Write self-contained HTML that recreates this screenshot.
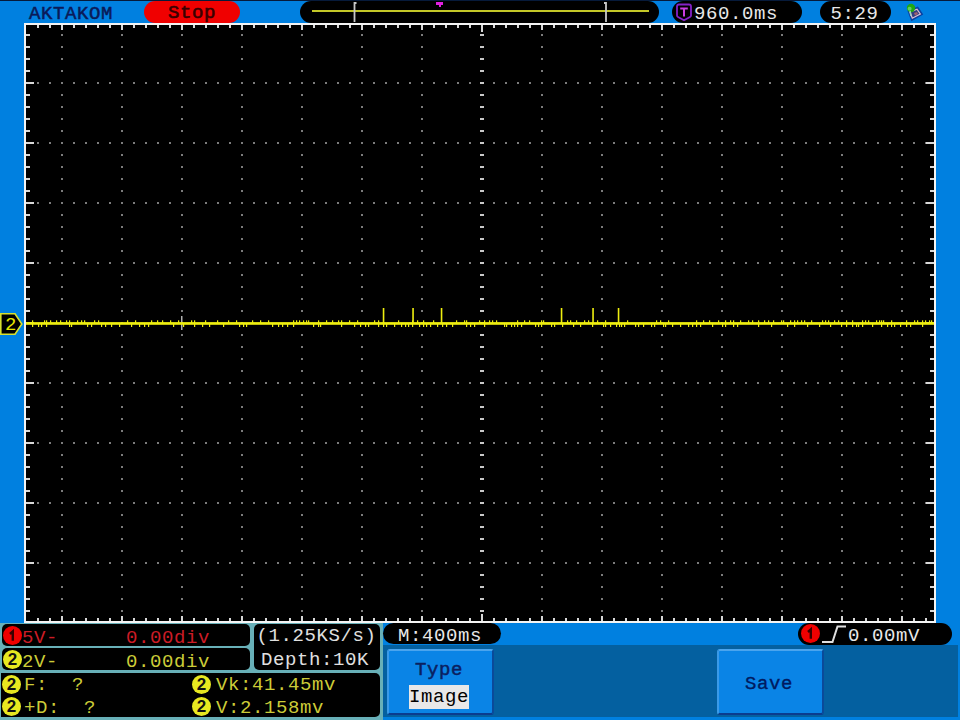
<!DOCTYPE html>
<html><head><meta charset="utf-8"><style>
*{margin:0;padding:0;box-sizing:border-box}
html,body{width:960px;height:720px;overflow:hidden;background:#0080e0;font-family:"Liberation Mono",monospace;}
.a{position:absolute}
.t{position:absolute;font-size:19px;line-height:20px;white-space:pre;letter-spacing:0.6px}
.pill{position:absolute;background:#000;border-radius:11px}
.box{position:absolute;background:#000;border-radius:5px}
.circ{position:absolute;border-radius:50%;text-align:center;color:#111;font-family:"Liberation Sans",sans-serif;font-weight:bold;font-size:17px;line-height:19px}
</style></head><body>
<div class="a" style="left:0;top:0;width:960px;height:1px;background:#061a3a"></div>
<div class="t" style="left:29px;top:4px;color:#0a1a58;font-size:19px;letter-spacing:0.6px;-webkit-text-stroke:0.5px #0a1a58">AKTAKOM</div>
<div class="pill" style="left:144px;top:1px;width:96px;height:22px;background:#f00000;border-radius:11px"></div>
<div class="t" style="left:168px;top:3px;color:#3a0000;-webkit-text-stroke:0.6px #3a0000">Stop</div>
<div class="pill" style="left:300px;top:1px;width:359px;height:22px"></div>
<div class="a" style="left:312px;top:10.4px;width:337px;height:1.6px;background:#c4c828"></div>
<svg class="a" style="left:350px;top:0" width="10" height="24"><path d="M4.5 22 V3 H6.5" fill="none" stroke="#c8c8c8" stroke-width="1.8"/></svg>
<svg class="a" style="left:600px;top:0" width="10" height="24"><path d="M6 22 V3 H4" fill="none" stroke="#c8c8c8" stroke-width="1.8"/></svg>
<div class="a" style="left:436px;top:2px;width:7px;height:3px;background:#e020e0"></div>
<div class="a" style="left:438.5px;top:4px;width:2px;height:3px;background:#e020e0"></div>
<div class="pill" style="left:672px;top:1px;width:130px;height:22px"></div>
<svg class="a" style="left:675px;top:3px" width="18" height="19" viewBox="0 0 18 19"><path d="M4 1.5 H14 Q16 1.5 16 3.5 V12.5 Q16 13.5 15 14 L9 17.3 L3 14 Q2 13.5 2 12.5 V3.5 Q2 1.5 4 1.5 Z" fill="none" stroke="#8422c8" stroke-width="1.8"/><path d="M5.2 5.6 H12.8 M9 5.6 V13.6" stroke="#c83ee0" stroke-width="2"/></svg>
<div class="t" style="left:694px;top:4px;color:#e8e8e8">960.0ms</div>
<div class="pill" style="left:820px;top:1px;width:71px;height:22px"></div>
<div class="t" style="left:830.5px;top:4px;color:#e8e8e8">5:29</div>
<svg class="a" style="left:900px;top:0px" width="28" height="24" viewBox="0 0 28 24"><path d="M9 11.5 L17.5 8 L21.5 14 L12 19.5 Z" fill="#0a3a9a" stroke="#0a40a0" stroke-width="2.5"/><path d="M10 12 L17 9.2 L20.3 14 L12.3 18.2 Z" fill="#304080" stroke="#e0c0d0" stroke-width="1.2"/><path d="M14 13 L17 12 L18 14 L15 15.5 Z" fill="#a06070"/><circle cx="11" cy="8" r="4.2" fill="#20a810"/><circle cx="9.6" cy="8.8" r="2" fill="#60d060"/><path d="M10 11 L11 16" stroke="#a0d0c0" stroke-width="1.5"/></svg>
<svg class="a" style="left:0;top:0" width="960" height="720">
<rect x="26" y="25" width="908" height="596" fill="#000"/>
<rect x="61" y="34" width="2" height="2" fill="#7c7c7c"/>
<rect x="61" y="46" width="2" height="2" fill="#7c7c7c"/>
<rect x="61" y="58" width="2" height="2" fill="#7c7c7c"/>
<rect x="61" y="70" width="2" height="2" fill="#7c7c7c"/>
<rect x="61" y="82" width="2" height="2" fill="#7c7c7c"/>
<rect x="61" y="94" width="2" height="2" fill="#7c7c7c"/>
<rect x="61" y="106" width="2" height="2" fill="#7c7c7c"/>
<rect x="61" y="118" width="2" height="2" fill="#7c7c7c"/>
<rect x="61" y="130" width="2" height="2" fill="#7c7c7c"/>
<rect x="61" y="142" width="2" height="2" fill="#7c7c7c"/>
<rect x="61" y="154" width="2" height="2" fill="#7c7c7c"/>
<rect x="61" y="166" width="2" height="2" fill="#7c7c7c"/>
<rect x="61" y="178" width="2" height="2" fill="#7c7c7c"/>
<rect x="61" y="190" width="2" height="2" fill="#7c7c7c"/>
<rect x="61" y="202" width="2" height="2" fill="#7c7c7c"/>
<rect x="61" y="214" width="2" height="2" fill="#7c7c7c"/>
<rect x="61" y="226" width="2" height="2" fill="#7c7c7c"/>
<rect x="61" y="238" width="2" height="2" fill="#7c7c7c"/>
<rect x="61" y="250" width="2" height="2" fill="#7c7c7c"/>
<rect x="61" y="262" width="2" height="2" fill="#7c7c7c"/>
<rect x="61" y="274" width="2" height="2" fill="#7c7c7c"/>
<rect x="61" y="286" width="2" height="2" fill="#7c7c7c"/>
<rect x="61" y="298" width="2" height="2" fill="#7c7c7c"/>
<rect x="61" y="310" width="2" height="2" fill="#7c7c7c"/>
<rect x="61" y="322" width="2" height="2" fill="#7c7c7c"/>
<rect x="61" y="334" width="2" height="2" fill="#7c7c7c"/>
<rect x="61" y="346" width="2" height="2" fill="#7c7c7c"/>
<rect x="61" y="358" width="2" height="2" fill="#7c7c7c"/>
<rect x="61" y="370" width="2" height="2" fill="#7c7c7c"/>
<rect x="61" y="382" width="2" height="2" fill="#7c7c7c"/>
<rect x="61" y="394" width="2" height="2" fill="#7c7c7c"/>
<rect x="61" y="406" width="2" height="2" fill="#7c7c7c"/>
<rect x="61" y="418" width="2" height="2" fill="#7c7c7c"/>
<rect x="61" y="430" width="2" height="2" fill="#7c7c7c"/>
<rect x="61" y="442" width="2" height="2" fill="#7c7c7c"/>
<rect x="61" y="454" width="2" height="2" fill="#7c7c7c"/>
<rect x="61" y="466" width="2" height="2" fill="#7c7c7c"/>
<rect x="61" y="478" width="2" height="2" fill="#7c7c7c"/>
<rect x="61" y="490" width="2" height="2" fill="#7c7c7c"/>
<rect x="61" y="502" width="2" height="2" fill="#7c7c7c"/>
<rect x="61" y="514" width="2" height="2" fill="#7c7c7c"/>
<rect x="61" y="526" width="2" height="2" fill="#7c7c7c"/>
<rect x="61" y="538" width="2" height="2" fill="#7c7c7c"/>
<rect x="61" y="550" width="2" height="2" fill="#7c7c7c"/>
<rect x="61" y="562" width="2" height="2" fill="#7c7c7c"/>
<rect x="61" y="574" width="2" height="2" fill="#7c7c7c"/>
<rect x="61" y="586" width="2" height="2" fill="#7c7c7c"/>
<rect x="61" y="598" width="2" height="2" fill="#7c7c7c"/>
<rect x="61" y="610" width="2" height="2" fill="#7c7c7c"/>
<rect x="121" y="34" width="2" height="2" fill="#7c7c7c"/>
<rect x="121" y="46" width="2" height="2" fill="#7c7c7c"/>
<rect x="121" y="58" width="2" height="2" fill="#7c7c7c"/>
<rect x="121" y="70" width="2" height="2" fill="#7c7c7c"/>
<rect x="121" y="82" width="2" height="2" fill="#7c7c7c"/>
<rect x="121" y="94" width="2" height="2" fill="#7c7c7c"/>
<rect x="121" y="106" width="2" height="2" fill="#7c7c7c"/>
<rect x="121" y="118" width="2" height="2" fill="#7c7c7c"/>
<rect x="121" y="130" width="2" height="2" fill="#7c7c7c"/>
<rect x="121" y="142" width="2" height="2" fill="#7c7c7c"/>
<rect x="121" y="154" width="2" height="2" fill="#7c7c7c"/>
<rect x="121" y="166" width="2" height="2" fill="#7c7c7c"/>
<rect x="121" y="178" width="2" height="2" fill="#7c7c7c"/>
<rect x="121" y="190" width="2" height="2" fill="#7c7c7c"/>
<rect x="121" y="202" width="2" height="2" fill="#7c7c7c"/>
<rect x="121" y="214" width="2" height="2" fill="#7c7c7c"/>
<rect x="121" y="226" width="2" height="2" fill="#7c7c7c"/>
<rect x="121" y="238" width="2" height="2" fill="#7c7c7c"/>
<rect x="121" y="250" width="2" height="2" fill="#7c7c7c"/>
<rect x="121" y="262" width="2" height="2" fill="#7c7c7c"/>
<rect x="121" y="274" width="2" height="2" fill="#7c7c7c"/>
<rect x="121" y="286" width="2" height="2" fill="#7c7c7c"/>
<rect x="121" y="298" width="2" height="2" fill="#7c7c7c"/>
<rect x="121" y="310" width="2" height="2" fill="#7c7c7c"/>
<rect x="121" y="322" width="2" height="2" fill="#7c7c7c"/>
<rect x="121" y="334" width="2" height="2" fill="#7c7c7c"/>
<rect x="121" y="346" width="2" height="2" fill="#7c7c7c"/>
<rect x="121" y="358" width="2" height="2" fill="#7c7c7c"/>
<rect x="121" y="370" width="2" height="2" fill="#7c7c7c"/>
<rect x="121" y="382" width="2" height="2" fill="#7c7c7c"/>
<rect x="121" y="394" width="2" height="2" fill="#7c7c7c"/>
<rect x="121" y="406" width="2" height="2" fill="#7c7c7c"/>
<rect x="121" y="418" width="2" height="2" fill="#7c7c7c"/>
<rect x="121" y="430" width="2" height="2" fill="#7c7c7c"/>
<rect x="121" y="442" width="2" height="2" fill="#7c7c7c"/>
<rect x="121" y="454" width="2" height="2" fill="#7c7c7c"/>
<rect x="121" y="466" width="2" height="2" fill="#7c7c7c"/>
<rect x="121" y="478" width="2" height="2" fill="#7c7c7c"/>
<rect x="121" y="490" width="2" height="2" fill="#7c7c7c"/>
<rect x="121" y="502" width="2" height="2" fill="#7c7c7c"/>
<rect x="121" y="514" width="2" height="2" fill="#7c7c7c"/>
<rect x="121" y="526" width="2" height="2" fill="#7c7c7c"/>
<rect x="121" y="538" width="2" height="2" fill="#7c7c7c"/>
<rect x="121" y="550" width="2" height="2" fill="#7c7c7c"/>
<rect x="121" y="562" width="2" height="2" fill="#7c7c7c"/>
<rect x="121" y="574" width="2" height="2" fill="#7c7c7c"/>
<rect x="121" y="586" width="2" height="2" fill="#7c7c7c"/>
<rect x="121" y="598" width="2" height="2" fill="#7c7c7c"/>
<rect x="121" y="610" width="2" height="2" fill="#7c7c7c"/>
<rect x="181" y="34" width="2" height="2" fill="#7c7c7c"/>
<rect x="181" y="46" width="2" height="2" fill="#7c7c7c"/>
<rect x="181" y="58" width="2" height="2" fill="#7c7c7c"/>
<rect x="181" y="70" width="2" height="2" fill="#7c7c7c"/>
<rect x="181" y="82" width="2" height="2" fill="#7c7c7c"/>
<rect x="181" y="94" width="2" height="2" fill="#7c7c7c"/>
<rect x="181" y="106" width="2" height="2" fill="#7c7c7c"/>
<rect x="181" y="118" width="2" height="2" fill="#7c7c7c"/>
<rect x="181" y="130" width="2" height="2" fill="#7c7c7c"/>
<rect x="181" y="142" width="2" height="2" fill="#7c7c7c"/>
<rect x="181" y="154" width="2" height="2" fill="#7c7c7c"/>
<rect x="181" y="166" width="2" height="2" fill="#7c7c7c"/>
<rect x="181" y="178" width="2" height="2" fill="#7c7c7c"/>
<rect x="181" y="190" width="2" height="2" fill="#7c7c7c"/>
<rect x="181" y="202" width="2" height="2" fill="#7c7c7c"/>
<rect x="181" y="214" width="2" height="2" fill="#7c7c7c"/>
<rect x="181" y="226" width="2" height="2" fill="#7c7c7c"/>
<rect x="181" y="238" width="2" height="2" fill="#7c7c7c"/>
<rect x="181" y="250" width="2" height="2" fill="#7c7c7c"/>
<rect x="181" y="262" width="2" height="2" fill="#7c7c7c"/>
<rect x="181" y="274" width="2" height="2" fill="#7c7c7c"/>
<rect x="181" y="286" width="2" height="2" fill="#7c7c7c"/>
<rect x="181" y="298" width="2" height="2" fill="#7c7c7c"/>
<rect x="181" y="310" width="2" height="2" fill="#7c7c7c"/>
<rect x="181" y="322" width="2" height="2" fill="#7c7c7c"/>
<rect x="181" y="334" width="2" height="2" fill="#7c7c7c"/>
<rect x="181" y="346" width="2" height="2" fill="#7c7c7c"/>
<rect x="181" y="358" width="2" height="2" fill="#7c7c7c"/>
<rect x="181" y="370" width="2" height="2" fill="#7c7c7c"/>
<rect x="181" y="382" width="2" height="2" fill="#7c7c7c"/>
<rect x="181" y="394" width="2" height="2" fill="#7c7c7c"/>
<rect x="181" y="406" width="2" height="2" fill="#7c7c7c"/>
<rect x="181" y="418" width="2" height="2" fill="#7c7c7c"/>
<rect x="181" y="430" width="2" height="2" fill="#7c7c7c"/>
<rect x="181" y="442" width="2" height="2" fill="#7c7c7c"/>
<rect x="181" y="454" width="2" height="2" fill="#7c7c7c"/>
<rect x="181" y="466" width="2" height="2" fill="#7c7c7c"/>
<rect x="181" y="478" width="2" height="2" fill="#7c7c7c"/>
<rect x="181" y="490" width="2" height="2" fill="#7c7c7c"/>
<rect x="181" y="502" width="2" height="2" fill="#7c7c7c"/>
<rect x="181" y="514" width="2" height="2" fill="#7c7c7c"/>
<rect x="181" y="526" width="2" height="2" fill="#7c7c7c"/>
<rect x="181" y="538" width="2" height="2" fill="#7c7c7c"/>
<rect x="181" y="550" width="2" height="2" fill="#7c7c7c"/>
<rect x="181" y="562" width="2" height="2" fill="#7c7c7c"/>
<rect x="181" y="574" width="2" height="2" fill="#7c7c7c"/>
<rect x="181" y="586" width="2" height="2" fill="#7c7c7c"/>
<rect x="181" y="598" width="2" height="2" fill="#7c7c7c"/>
<rect x="181" y="610" width="2" height="2" fill="#7c7c7c"/>
<rect x="241" y="34" width="2" height="2" fill="#7c7c7c"/>
<rect x="241" y="46" width="2" height="2" fill="#7c7c7c"/>
<rect x="241" y="58" width="2" height="2" fill="#7c7c7c"/>
<rect x="241" y="70" width="2" height="2" fill="#7c7c7c"/>
<rect x="241" y="82" width="2" height="2" fill="#7c7c7c"/>
<rect x="241" y="94" width="2" height="2" fill="#7c7c7c"/>
<rect x="241" y="106" width="2" height="2" fill="#7c7c7c"/>
<rect x="241" y="118" width="2" height="2" fill="#7c7c7c"/>
<rect x="241" y="130" width="2" height="2" fill="#7c7c7c"/>
<rect x="241" y="142" width="2" height="2" fill="#7c7c7c"/>
<rect x="241" y="154" width="2" height="2" fill="#7c7c7c"/>
<rect x="241" y="166" width="2" height="2" fill="#7c7c7c"/>
<rect x="241" y="178" width="2" height="2" fill="#7c7c7c"/>
<rect x="241" y="190" width="2" height="2" fill="#7c7c7c"/>
<rect x="241" y="202" width="2" height="2" fill="#7c7c7c"/>
<rect x="241" y="214" width="2" height="2" fill="#7c7c7c"/>
<rect x="241" y="226" width="2" height="2" fill="#7c7c7c"/>
<rect x="241" y="238" width="2" height="2" fill="#7c7c7c"/>
<rect x="241" y="250" width="2" height="2" fill="#7c7c7c"/>
<rect x="241" y="262" width="2" height="2" fill="#7c7c7c"/>
<rect x="241" y="274" width="2" height="2" fill="#7c7c7c"/>
<rect x="241" y="286" width="2" height="2" fill="#7c7c7c"/>
<rect x="241" y="298" width="2" height="2" fill="#7c7c7c"/>
<rect x="241" y="310" width="2" height="2" fill="#7c7c7c"/>
<rect x="241" y="322" width="2" height="2" fill="#7c7c7c"/>
<rect x="241" y="334" width="2" height="2" fill="#7c7c7c"/>
<rect x="241" y="346" width="2" height="2" fill="#7c7c7c"/>
<rect x="241" y="358" width="2" height="2" fill="#7c7c7c"/>
<rect x="241" y="370" width="2" height="2" fill="#7c7c7c"/>
<rect x="241" y="382" width="2" height="2" fill="#7c7c7c"/>
<rect x="241" y="394" width="2" height="2" fill="#7c7c7c"/>
<rect x="241" y="406" width="2" height="2" fill="#7c7c7c"/>
<rect x="241" y="418" width="2" height="2" fill="#7c7c7c"/>
<rect x="241" y="430" width="2" height="2" fill="#7c7c7c"/>
<rect x="241" y="442" width="2" height="2" fill="#7c7c7c"/>
<rect x="241" y="454" width="2" height="2" fill="#7c7c7c"/>
<rect x="241" y="466" width="2" height="2" fill="#7c7c7c"/>
<rect x="241" y="478" width="2" height="2" fill="#7c7c7c"/>
<rect x="241" y="490" width="2" height="2" fill="#7c7c7c"/>
<rect x="241" y="502" width="2" height="2" fill="#7c7c7c"/>
<rect x="241" y="514" width="2" height="2" fill="#7c7c7c"/>
<rect x="241" y="526" width="2" height="2" fill="#7c7c7c"/>
<rect x="241" y="538" width="2" height="2" fill="#7c7c7c"/>
<rect x="241" y="550" width="2" height="2" fill="#7c7c7c"/>
<rect x="241" y="562" width="2" height="2" fill="#7c7c7c"/>
<rect x="241" y="574" width="2" height="2" fill="#7c7c7c"/>
<rect x="241" y="586" width="2" height="2" fill="#7c7c7c"/>
<rect x="241" y="598" width="2" height="2" fill="#7c7c7c"/>
<rect x="241" y="610" width="2" height="2" fill="#7c7c7c"/>
<rect x="301" y="34" width="2" height="2" fill="#7c7c7c"/>
<rect x="301" y="46" width="2" height="2" fill="#7c7c7c"/>
<rect x="301" y="58" width="2" height="2" fill="#7c7c7c"/>
<rect x="301" y="70" width="2" height="2" fill="#7c7c7c"/>
<rect x="301" y="82" width="2" height="2" fill="#7c7c7c"/>
<rect x="301" y="94" width="2" height="2" fill="#7c7c7c"/>
<rect x="301" y="106" width="2" height="2" fill="#7c7c7c"/>
<rect x="301" y="118" width="2" height="2" fill="#7c7c7c"/>
<rect x="301" y="130" width="2" height="2" fill="#7c7c7c"/>
<rect x="301" y="142" width="2" height="2" fill="#7c7c7c"/>
<rect x="301" y="154" width="2" height="2" fill="#7c7c7c"/>
<rect x="301" y="166" width="2" height="2" fill="#7c7c7c"/>
<rect x="301" y="178" width="2" height="2" fill="#7c7c7c"/>
<rect x="301" y="190" width="2" height="2" fill="#7c7c7c"/>
<rect x="301" y="202" width="2" height="2" fill="#7c7c7c"/>
<rect x="301" y="214" width="2" height="2" fill="#7c7c7c"/>
<rect x="301" y="226" width="2" height="2" fill="#7c7c7c"/>
<rect x="301" y="238" width="2" height="2" fill="#7c7c7c"/>
<rect x="301" y="250" width="2" height="2" fill="#7c7c7c"/>
<rect x="301" y="262" width="2" height="2" fill="#7c7c7c"/>
<rect x="301" y="274" width="2" height="2" fill="#7c7c7c"/>
<rect x="301" y="286" width="2" height="2" fill="#7c7c7c"/>
<rect x="301" y="298" width="2" height="2" fill="#7c7c7c"/>
<rect x="301" y="310" width="2" height="2" fill="#7c7c7c"/>
<rect x="301" y="322" width="2" height="2" fill="#7c7c7c"/>
<rect x="301" y="334" width="2" height="2" fill="#7c7c7c"/>
<rect x="301" y="346" width="2" height="2" fill="#7c7c7c"/>
<rect x="301" y="358" width="2" height="2" fill="#7c7c7c"/>
<rect x="301" y="370" width="2" height="2" fill="#7c7c7c"/>
<rect x="301" y="382" width="2" height="2" fill="#7c7c7c"/>
<rect x="301" y="394" width="2" height="2" fill="#7c7c7c"/>
<rect x="301" y="406" width="2" height="2" fill="#7c7c7c"/>
<rect x="301" y="418" width="2" height="2" fill="#7c7c7c"/>
<rect x="301" y="430" width="2" height="2" fill="#7c7c7c"/>
<rect x="301" y="442" width="2" height="2" fill="#7c7c7c"/>
<rect x="301" y="454" width="2" height="2" fill="#7c7c7c"/>
<rect x="301" y="466" width="2" height="2" fill="#7c7c7c"/>
<rect x="301" y="478" width="2" height="2" fill="#7c7c7c"/>
<rect x="301" y="490" width="2" height="2" fill="#7c7c7c"/>
<rect x="301" y="502" width="2" height="2" fill="#7c7c7c"/>
<rect x="301" y="514" width="2" height="2" fill="#7c7c7c"/>
<rect x="301" y="526" width="2" height="2" fill="#7c7c7c"/>
<rect x="301" y="538" width="2" height="2" fill="#7c7c7c"/>
<rect x="301" y="550" width="2" height="2" fill="#7c7c7c"/>
<rect x="301" y="562" width="2" height="2" fill="#7c7c7c"/>
<rect x="301" y="574" width="2" height="2" fill="#7c7c7c"/>
<rect x="301" y="586" width="2" height="2" fill="#7c7c7c"/>
<rect x="301" y="598" width="2" height="2" fill="#7c7c7c"/>
<rect x="301" y="610" width="2" height="2" fill="#7c7c7c"/>
<rect x="361" y="34" width="2" height="2" fill="#7c7c7c"/>
<rect x="361" y="46" width="2" height="2" fill="#7c7c7c"/>
<rect x="361" y="58" width="2" height="2" fill="#7c7c7c"/>
<rect x="361" y="70" width="2" height="2" fill="#7c7c7c"/>
<rect x="361" y="82" width="2" height="2" fill="#7c7c7c"/>
<rect x="361" y="94" width="2" height="2" fill="#7c7c7c"/>
<rect x="361" y="106" width="2" height="2" fill="#7c7c7c"/>
<rect x="361" y="118" width="2" height="2" fill="#7c7c7c"/>
<rect x="361" y="130" width="2" height="2" fill="#7c7c7c"/>
<rect x="361" y="142" width="2" height="2" fill="#7c7c7c"/>
<rect x="361" y="154" width="2" height="2" fill="#7c7c7c"/>
<rect x="361" y="166" width="2" height="2" fill="#7c7c7c"/>
<rect x="361" y="178" width="2" height="2" fill="#7c7c7c"/>
<rect x="361" y="190" width="2" height="2" fill="#7c7c7c"/>
<rect x="361" y="202" width="2" height="2" fill="#7c7c7c"/>
<rect x="361" y="214" width="2" height="2" fill="#7c7c7c"/>
<rect x="361" y="226" width="2" height="2" fill="#7c7c7c"/>
<rect x="361" y="238" width="2" height="2" fill="#7c7c7c"/>
<rect x="361" y="250" width="2" height="2" fill="#7c7c7c"/>
<rect x="361" y="262" width="2" height="2" fill="#7c7c7c"/>
<rect x="361" y="274" width="2" height="2" fill="#7c7c7c"/>
<rect x="361" y="286" width="2" height="2" fill="#7c7c7c"/>
<rect x="361" y="298" width="2" height="2" fill="#7c7c7c"/>
<rect x="361" y="310" width="2" height="2" fill="#7c7c7c"/>
<rect x="361" y="322" width="2" height="2" fill="#7c7c7c"/>
<rect x="361" y="334" width="2" height="2" fill="#7c7c7c"/>
<rect x="361" y="346" width="2" height="2" fill="#7c7c7c"/>
<rect x="361" y="358" width="2" height="2" fill="#7c7c7c"/>
<rect x="361" y="370" width="2" height="2" fill="#7c7c7c"/>
<rect x="361" y="382" width="2" height="2" fill="#7c7c7c"/>
<rect x="361" y="394" width="2" height="2" fill="#7c7c7c"/>
<rect x="361" y="406" width="2" height="2" fill="#7c7c7c"/>
<rect x="361" y="418" width="2" height="2" fill="#7c7c7c"/>
<rect x="361" y="430" width="2" height="2" fill="#7c7c7c"/>
<rect x="361" y="442" width="2" height="2" fill="#7c7c7c"/>
<rect x="361" y="454" width="2" height="2" fill="#7c7c7c"/>
<rect x="361" y="466" width="2" height="2" fill="#7c7c7c"/>
<rect x="361" y="478" width="2" height="2" fill="#7c7c7c"/>
<rect x="361" y="490" width="2" height="2" fill="#7c7c7c"/>
<rect x="361" y="502" width="2" height="2" fill="#7c7c7c"/>
<rect x="361" y="514" width="2" height="2" fill="#7c7c7c"/>
<rect x="361" y="526" width="2" height="2" fill="#7c7c7c"/>
<rect x="361" y="538" width="2" height="2" fill="#7c7c7c"/>
<rect x="361" y="550" width="2" height="2" fill="#7c7c7c"/>
<rect x="361" y="562" width="2" height="2" fill="#7c7c7c"/>
<rect x="361" y="574" width="2" height="2" fill="#7c7c7c"/>
<rect x="361" y="586" width="2" height="2" fill="#7c7c7c"/>
<rect x="361" y="598" width="2" height="2" fill="#7c7c7c"/>
<rect x="361" y="610" width="2" height="2" fill="#7c7c7c"/>
<rect x="421" y="34" width="2" height="2" fill="#7c7c7c"/>
<rect x="421" y="46" width="2" height="2" fill="#7c7c7c"/>
<rect x="421" y="58" width="2" height="2" fill="#7c7c7c"/>
<rect x="421" y="70" width="2" height="2" fill="#7c7c7c"/>
<rect x="421" y="82" width="2" height="2" fill="#7c7c7c"/>
<rect x="421" y="94" width="2" height="2" fill="#7c7c7c"/>
<rect x="421" y="106" width="2" height="2" fill="#7c7c7c"/>
<rect x="421" y="118" width="2" height="2" fill="#7c7c7c"/>
<rect x="421" y="130" width="2" height="2" fill="#7c7c7c"/>
<rect x="421" y="142" width="2" height="2" fill="#7c7c7c"/>
<rect x="421" y="154" width="2" height="2" fill="#7c7c7c"/>
<rect x="421" y="166" width="2" height="2" fill="#7c7c7c"/>
<rect x="421" y="178" width="2" height="2" fill="#7c7c7c"/>
<rect x="421" y="190" width="2" height="2" fill="#7c7c7c"/>
<rect x="421" y="202" width="2" height="2" fill="#7c7c7c"/>
<rect x="421" y="214" width="2" height="2" fill="#7c7c7c"/>
<rect x="421" y="226" width="2" height="2" fill="#7c7c7c"/>
<rect x="421" y="238" width="2" height="2" fill="#7c7c7c"/>
<rect x="421" y="250" width="2" height="2" fill="#7c7c7c"/>
<rect x="421" y="262" width="2" height="2" fill="#7c7c7c"/>
<rect x="421" y="274" width="2" height="2" fill="#7c7c7c"/>
<rect x="421" y="286" width="2" height="2" fill="#7c7c7c"/>
<rect x="421" y="298" width="2" height="2" fill="#7c7c7c"/>
<rect x="421" y="310" width="2" height="2" fill="#7c7c7c"/>
<rect x="421" y="322" width="2" height="2" fill="#7c7c7c"/>
<rect x="421" y="334" width="2" height="2" fill="#7c7c7c"/>
<rect x="421" y="346" width="2" height="2" fill="#7c7c7c"/>
<rect x="421" y="358" width="2" height="2" fill="#7c7c7c"/>
<rect x="421" y="370" width="2" height="2" fill="#7c7c7c"/>
<rect x="421" y="382" width="2" height="2" fill="#7c7c7c"/>
<rect x="421" y="394" width="2" height="2" fill="#7c7c7c"/>
<rect x="421" y="406" width="2" height="2" fill="#7c7c7c"/>
<rect x="421" y="418" width="2" height="2" fill="#7c7c7c"/>
<rect x="421" y="430" width="2" height="2" fill="#7c7c7c"/>
<rect x="421" y="442" width="2" height="2" fill="#7c7c7c"/>
<rect x="421" y="454" width="2" height="2" fill="#7c7c7c"/>
<rect x="421" y="466" width="2" height="2" fill="#7c7c7c"/>
<rect x="421" y="478" width="2" height="2" fill="#7c7c7c"/>
<rect x="421" y="490" width="2" height="2" fill="#7c7c7c"/>
<rect x="421" y="502" width="2" height="2" fill="#7c7c7c"/>
<rect x="421" y="514" width="2" height="2" fill="#7c7c7c"/>
<rect x="421" y="526" width="2" height="2" fill="#7c7c7c"/>
<rect x="421" y="538" width="2" height="2" fill="#7c7c7c"/>
<rect x="421" y="550" width="2" height="2" fill="#7c7c7c"/>
<rect x="421" y="562" width="2" height="2" fill="#7c7c7c"/>
<rect x="421" y="574" width="2" height="2" fill="#7c7c7c"/>
<rect x="421" y="586" width="2" height="2" fill="#7c7c7c"/>
<rect x="421" y="598" width="2" height="2" fill="#7c7c7c"/>
<rect x="421" y="610" width="2" height="2" fill="#7c7c7c"/>
<rect x="541" y="34" width="2" height="2" fill="#7c7c7c"/>
<rect x="541" y="46" width="2" height="2" fill="#7c7c7c"/>
<rect x="541" y="58" width="2" height="2" fill="#7c7c7c"/>
<rect x="541" y="70" width="2" height="2" fill="#7c7c7c"/>
<rect x="541" y="82" width="2" height="2" fill="#7c7c7c"/>
<rect x="541" y="94" width="2" height="2" fill="#7c7c7c"/>
<rect x="541" y="106" width="2" height="2" fill="#7c7c7c"/>
<rect x="541" y="118" width="2" height="2" fill="#7c7c7c"/>
<rect x="541" y="130" width="2" height="2" fill="#7c7c7c"/>
<rect x="541" y="142" width="2" height="2" fill="#7c7c7c"/>
<rect x="541" y="154" width="2" height="2" fill="#7c7c7c"/>
<rect x="541" y="166" width="2" height="2" fill="#7c7c7c"/>
<rect x="541" y="178" width="2" height="2" fill="#7c7c7c"/>
<rect x="541" y="190" width="2" height="2" fill="#7c7c7c"/>
<rect x="541" y="202" width="2" height="2" fill="#7c7c7c"/>
<rect x="541" y="214" width="2" height="2" fill="#7c7c7c"/>
<rect x="541" y="226" width="2" height="2" fill="#7c7c7c"/>
<rect x="541" y="238" width="2" height="2" fill="#7c7c7c"/>
<rect x="541" y="250" width="2" height="2" fill="#7c7c7c"/>
<rect x="541" y="262" width="2" height="2" fill="#7c7c7c"/>
<rect x="541" y="274" width="2" height="2" fill="#7c7c7c"/>
<rect x="541" y="286" width="2" height="2" fill="#7c7c7c"/>
<rect x="541" y="298" width="2" height="2" fill="#7c7c7c"/>
<rect x="541" y="310" width="2" height="2" fill="#7c7c7c"/>
<rect x="541" y="322" width="2" height="2" fill="#7c7c7c"/>
<rect x="541" y="334" width="2" height="2" fill="#7c7c7c"/>
<rect x="541" y="346" width="2" height="2" fill="#7c7c7c"/>
<rect x="541" y="358" width="2" height="2" fill="#7c7c7c"/>
<rect x="541" y="370" width="2" height="2" fill="#7c7c7c"/>
<rect x="541" y="382" width="2" height="2" fill="#7c7c7c"/>
<rect x="541" y="394" width="2" height="2" fill="#7c7c7c"/>
<rect x="541" y="406" width="2" height="2" fill="#7c7c7c"/>
<rect x="541" y="418" width="2" height="2" fill="#7c7c7c"/>
<rect x="541" y="430" width="2" height="2" fill="#7c7c7c"/>
<rect x="541" y="442" width="2" height="2" fill="#7c7c7c"/>
<rect x="541" y="454" width="2" height="2" fill="#7c7c7c"/>
<rect x="541" y="466" width="2" height="2" fill="#7c7c7c"/>
<rect x="541" y="478" width="2" height="2" fill="#7c7c7c"/>
<rect x="541" y="490" width="2" height="2" fill="#7c7c7c"/>
<rect x="541" y="502" width="2" height="2" fill="#7c7c7c"/>
<rect x="541" y="514" width="2" height="2" fill="#7c7c7c"/>
<rect x="541" y="526" width="2" height="2" fill="#7c7c7c"/>
<rect x="541" y="538" width="2" height="2" fill="#7c7c7c"/>
<rect x="541" y="550" width="2" height="2" fill="#7c7c7c"/>
<rect x="541" y="562" width="2" height="2" fill="#7c7c7c"/>
<rect x="541" y="574" width="2" height="2" fill="#7c7c7c"/>
<rect x="541" y="586" width="2" height="2" fill="#7c7c7c"/>
<rect x="541" y="598" width="2" height="2" fill="#7c7c7c"/>
<rect x="541" y="610" width="2" height="2" fill="#7c7c7c"/>
<rect x="601" y="34" width="2" height="2" fill="#7c7c7c"/>
<rect x="601" y="46" width="2" height="2" fill="#7c7c7c"/>
<rect x="601" y="58" width="2" height="2" fill="#7c7c7c"/>
<rect x="601" y="70" width="2" height="2" fill="#7c7c7c"/>
<rect x="601" y="82" width="2" height="2" fill="#7c7c7c"/>
<rect x="601" y="94" width="2" height="2" fill="#7c7c7c"/>
<rect x="601" y="106" width="2" height="2" fill="#7c7c7c"/>
<rect x="601" y="118" width="2" height="2" fill="#7c7c7c"/>
<rect x="601" y="130" width="2" height="2" fill="#7c7c7c"/>
<rect x="601" y="142" width="2" height="2" fill="#7c7c7c"/>
<rect x="601" y="154" width="2" height="2" fill="#7c7c7c"/>
<rect x="601" y="166" width="2" height="2" fill="#7c7c7c"/>
<rect x="601" y="178" width="2" height="2" fill="#7c7c7c"/>
<rect x="601" y="190" width="2" height="2" fill="#7c7c7c"/>
<rect x="601" y="202" width="2" height="2" fill="#7c7c7c"/>
<rect x="601" y="214" width="2" height="2" fill="#7c7c7c"/>
<rect x="601" y="226" width="2" height="2" fill="#7c7c7c"/>
<rect x="601" y="238" width="2" height="2" fill="#7c7c7c"/>
<rect x="601" y="250" width="2" height="2" fill="#7c7c7c"/>
<rect x="601" y="262" width="2" height="2" fill="#7c7c7c"/>
<rect x="601" y="274" width="2" height="2" fill="#7c7c7c"/>
<rect x="601" y="286" width="2" height="2" fill="#7c7c7c"/>
<rect x="601" y="298" width="2" height="2" fill="#7c7c7c"/>
<rect x="601" y="310" width="2" height="2" fill="#7c7c7c"/>
<rect x="601" y="322" width="2" height="2" fill="#7c7c7c"/>
<rect x="601" y="334" width="2" height="2" fill="#7c7c7c"/>
<rect x="601" y="346" width="2" height="2" fill="#7c7c7c"/>
<rect x="601" y="358" width="2" height="2" fill="#7c7c7c"/>
<rect x="601" y="370" width="2" height="2" fill="#7c7c7c"/>
<rect x="601" y="382" width="2" height="2" fill="#7c7c7c"/>
<rect x="601" y="394" width="2" height="2" fill="#7c7c7c"/>
<rect x="601" y="406" width="2" height="2" fill="#7c7c7c"/>
<rect x="601" y="418" width="2" height="2" fill="#7c7c7c"/>
<rect x="601" y="430" width="2" height="2" fill="#7c7c7c"/>
<rect x="601" y="442" width="2" height="2" fill="#7c7c7c"/>
<rect x="601" y="454" width="2" height="2" fill="#7c7c7c"/>
<rect x="601" y="466" width="2" height="2" fill="#7c7c7c"/>
<rect x="601" y="478" width="2" height="2" fill="#7c7c7c"/>
<rect x="601" y="490" width="2" height="2" fill="#7c7c7c"/>
<rect x="601" y="502" width="2" height="2" fill="#7c7c7c"/>
<rect x="601" y="514" width="2" height="2" fill="#7c7c7c"/>
<rect x="601" y="526" width="2" height="2" fill="#7c7c7c"/>
<rect x="601" y="538" width="2" height="2" fill="#7c7c7c"/>
<rect x="601" y="550" width="2" height="2" fill="#7c7c7c"/>
<rect x="601" y="562" width="2" height="2" fill="#7c7c7c"/>
<rect x="601" y="574" width="2" height="2" fill="#7c7c7c"/>
<rect x="601" y="586" width="2" height="2" fill="#7c7c7c"/>
<rect x="601" y="598" width="2" height="2" fill="#7c7c7c"/>
<rect x="601" y="610" width="2" height="2" fill="#7c7c7c"/>
<rect x="661" y="34" width="2" height="2" fill="#7c7c7c"/>
<rect x="661" y="46" width="2" height="2" fill="#7c7c7c"/>
<rect x="661" y="58" width="2" height="2" fill="#7c7c7c"/>
<rect x="661" y="70" width="2" height="2" fill="#7c7c7c"/>
<rect x="661" y="82" width="2" height="2" fill="#7c7c7c"/>
<rect x="661" y="94" width="2" height="2" fill="#7c7c7c"/>
<rect x="661" y="106" width="2" height="2" fill="#7c7c7c"/>
<rect x="661" y="118" width="2" height="2" fill="#7c7c7c"/>
<rect x="661" y="130" width="2" height="2" fill="#7c7c7c"/>
<rect x="661" y="142" width="2" height="2" fill="#7c7c7c"/>
<rect x="661" y="154" width="2" height="2" fill="#7c7c7c"/>
<rect x="661" y="166" width="2" height="2" fill="#7c7c7c"/>
<rect x="661" y="178" width="2" height="2" fill="#7c7c7c"/>
<rect x="661" y="190" width="2" height="2" fill="#7c7c7c"/>
<rect x="661" y="202" width="2" height="2" fill="#7c7c7c"/>
<rect x="661" y="214" width="2" height="2" fill="#7c7c7c"/>
<rect x="661" y="226" width="2" height="2" fill="#7c7c7c"/>
<rect x="661" y="238" width="2" height="2" fill="#7c7c7c"/>
<rect x="661" y="250" width="2" height="2" fill="#7c7c7c"/>
<rect x="661" y="262" width="2" height="2" fill="#7c7c7c"/>
<rect x="661" y="274" width="2" height="2" fill="#7c7c7c"/>
<rect x="661" y="286" width="2" height="2" fill="#7c7c7c"/>
<rect x="661" y="298" width="2" height="2" fill="#7c7c7c"/>
<rect x="661" y="310" width="2" height="2" fill="#7c7c7c"/>
<rect x="661" y="322" width="2" height="2" fill="#7c7c7c"/>
<rect x="661" y="334" width="2" height="2" fill="#7c7c7c"/>
<rect x="661" y="346" width="2" height="2" fill="#7c7c7c"/>
<rect x="661" y="358" width="2" height="2" fill="#7c7c7c"/>
<rect x="661" y="370" width="2" height="2" fill="#7c7c7c"/>
<rect x="661" y="382" width="2" height="2" fill="#7c7c7c"/>
<rect x="661" y="394" width="2" height="2" fill="#7c7c7c"/>
<rect x="661" y="406" width="2" height="2" fill="#7c7c7c"/>
<rect x="661" y="418" width="2" height="2" fill="#7c7c7c"/>
<rect x="661" y="430" width="2" height="2" fill="#7c7c7c"/>
<rect x="661" y="442" width="2" height="2" fill="#7c7c7c"/>
<rect x="661" y="454" width="2" height="2" fill="#7c7c7c"/>
<rect x="661" y="466" width="2" height="2" fill="#7c7c7c"/>
<rect x="661" y="478" width="2" height="2" fill="#7c7c7c"/>
<rect x="661" y="490" width="2" height="2" fill="#7c7c7c"/>
<rect x="661" y="502" width="2" height="2" fill="#7c7c7c"/>
<rect x="661" y="514" width="2" height="2" fill="#7c7c7c"/>
<rect x="661" y="526" width="2" height="2" fill="#7c7c7c"/>
<rect x="661" y="538" width="2" height="2" fill="#7c7c7c"/>
<rect x="661" y="550" width="2" height="2" fill="#7c7c7c"/>
<rect x="661" y="562" width="2" height="2" fill="#7c7c7c"/>
<rect x="661" y="574" width="2" height="2" fill="#7c7c7c"/>
<rect x="661" y="586" width="2" height="2" fill="#7c7c7c"/>
<rect x="661" y="598" width="2" height="2" fill="#7c7c7c"/>
<rect x="661" y="610" width="2" height="2" fill="#7c7c7c"/>
<rect x="721" y="34" width="2" height="2" fill="#7c7c7c"/>
<rect x="721" y="46" width="2" height="2" fill="#7c7c7c"/>
<rect x="721" y="58" width="2" height="2" fill="#7c7c7c"/>
<rect x="721" y="70" width="2" height="2" fill="#7c7c7c"/>
<rect x="721" y="82" width="2" height="2" fill="#7c7c7c"/>
<rect x="721" y="94" width="2" height="2" fill="#7c7c7c"/>
<rect x="721" y="106" width="2" height="2" fill="#7c7c7c"/>
<rect x="721" y="118" width="2" height="2" fill="#7c7c7c"/>
<rect x="721" y="130" width="2" height="2" fill="#7c7c7c"/>
<rect x="721" y="142" width="2" height="2" fill="#7c7c7c"/>
<rect x="721" y="154" width="2" height="2" fill="#7c7c7c"/>
<rect x="721" y="166" width="2" height="2" fill="#7c7c7c"/>
<rect x="721" y="178" width="2" height="2" fill="#7c7c7c"/>
<rect x="721" y="190" width="2" height="2" fill="#7c7c7c"/>
<rect x="721" y="202" width="2" height="2" fill="#7c7c7c"/>
<rect x="721" y="214" width="2" height="2" fill="#7c7c7c"/>
<rect x="721" y="226" width="2" height="2" fill="#7c7c7c"/>
<rect x="721" y="238" width="2" height="2" fill="#7c7c7c"/>
<rect x="721" y="250" width="2" height="2" fill="#7c7c7c"/>
<rect x="721" y="262" width="2" height="2" fill="#7c7c7c"/>
<rect x="721" y="274" width="2" height="2" fill="#7c7c7c"/>
<rect x="721" y="286" width="2" height="2" fill="#7c7c7c"/>
<rect x="721" y="298" width="2" height="2" fill="#7c7c7c"/>
<rect x="721" y="310" width="2" height="2" fill="#7c7c7c"/>
<rect x="721" y="322" width="2" height="2" fill="#7c7c7c"/>
<rect x="721" y="334" width="2" height="2" fill="#7c7c7c"/>
<rect x="721" y="346" width="2" height="2" fill="#7c7c7c"/>
<rect x="721" y="358" width="2" height="2" fill="#7c7c7c"/>
<rect x="721" y="370" width="2" height="2" fill="#7c7c7c"/>
<rect x="721" y="382" width="2" height="2" fill="#7c7c7c"/>
<rect x="721" y="394" width="2" height="2" fill="#7c7c7c"/>
<rect x="721" y="406" width="2" height="2" fill="#7c7c7c"/>
<rect x="721" y="418" width="2" height="2" fill="#7c7c7c"/>
<rect x="721" y="430" width="2" height="2" fill="#7c7c7c"/>
<rect x="721" y="442" width="2" height="2" fill="#7c7c7c"/>
<rect x="721" y="454" width="2" height="2" fill="#7c7c7c"/>
<rect x="721" y="466" width="2" height="2" fill="#7c7c7c"/>
<rect x="721" y="478" width="2" height="2" fill="#7c7c7c"/>
<rect x="721" y="490" width="2" height="2" fill="#7c7c7c"/>
<rect x="721" y="502" width="2" height="2" fill="#7c7c7c"/>
<rect x="721" y="514" width="2" height="2" fill="#7c7c7c"/>
<rect x="721" y="526" width="2" height="2" fill="#7c7c7c"/>
<rect x="721" y="538" width="2" height="2" fill="#7c7c7c"/>
<rect x="721" y="550" width="2" height="2" fill="#7c7c7c"/>
<rect x="721" y="562" width="2" height="2" fill="#7c7c7c"/>
<rect x="721" y="574" width="2" height="2" fill="#7c7c7c"/>
<rect x="721" y="586" width="2" height="2" fill="#7c7c7c"/>
<rect x="721" y="598" width="2" height="2" fill="#7c7c7c"/>
<rect x="721" y="610" width="2" height="2" fill="#7c7c7c"/>
<rect x="781" y="34" width="2" height="2" fill="#7c7c7c"/>
<rect x="781" y="46" width="2" height="2" fill="#7c7c7c"/>
<rect x="781" y="58" width="2" height="2" fill="#7c7c7c"/>
<rect x="781" y="70" width="2" height="2" fill="#7c7c7c"/>
<rect x="781" y="82" width="2" height="2" fill="#7c7c7c"/>
<rect x="781" y="94" width="2" height="2" fill="#7c7c7c"/>
<rect x="781" y="106" width="2" height="2" fill="#7c7c7c"/>
<rect x="781" y="118" width="2" height="2" fill="#7c7c7c"/>
<rect x="781" y="130" width="2" height="2" fill="#7c7c7c"/>
<rect x="781" y="142" width="2" height="2" fill="#7c7c7c"/>
<rect x="781" y="154" width="2" height="2" fill="#7c7c7c"/>
<rect x="781" y="166" width="2" height="2" fill="#7c7c7c"/>
<rect x="781" y="178" width="2" height="2" fill="#7c7c7c"/>
<rect x="781" y="190" width="2" height="2" fill="#7c7c7c"/>
<rect x="781" y="202" width="2" height="2" fill="#7c7c7c"/>
<rect x="781" y="214" width="2" height="2" fill="#7c7c7c"/>
<rect x="781" y="226" width="2" height="2" fill="#7c7c7c"/>
<rect x="781" y="238" width="2" height="2" fill="#7c7c7c"/>
<rect x="781" y="250" width="2" height="2" fill="#7c7c7c"/>
<rect x="781" y="262" width="2" height="2" fill="#7c7c7c"/>
<rect x="781" y="274" width="2" height="2" fill="#7c7c7c"/>
<rect x="781" y="286" width="2" height="2" fill="#7c7c7c"/>
<rect x="781" y="298" width="2" height="2" fill="#7c7c7c"/>
<rect x="781" y="310" width="2" height="2" fill="#7c7c7c"/>
<rect x="781" y="322" width="2" height="2" fill="#7c7c7c"/>
<rect x="781" y="334" width="2" height="2" fill="#7c7c7c"/>
<rect x="781" y="346" width="2" height="2" fill="#7c7c7c"/>
<rect x="781" y="358" width="2" height="2" fill="#7c7c7c"/>
<rect x="781" y="370" width="2" height="2" fill="#7c7c7c"/>
<rect x="781" y="382" width="2" height="2" fill="#7c7c7c"/>
<rect x="781" y="394" width="2" height="2" fill="#7c7c7c"/>
<rect x="781" y="406" width="2" height="2" fill="#7c7c7c"/>
<rect x="781" y="418" width="2" height="2" fill="#7c7c7c"/>
<rect x="781" y="430" width="2" height="2" fill="#7c7c7c"/>
<rect x="781" y="442" width="2" height="2" fill="#7c7c7c"/>
<rect x="781" y="454" width="2" height="2" fill="#7c7c7c"/>
<rect x="781" y="466" width="2" height="2" fill="#7c7c7c"/>
<rect x="781" y="478" width="2" height="2" fill="#7c7c7c"/>
<rect x="781" y="490" width="2" height="2" fill="#7c7c7c"/>
<rect x="781" y="502" width="2" height="2" fill="#7c7c7c"/>
<rect x="781" y="514" width="2" height="2" fill="#7c7c7c"/>
<rect x="781" y="526" width="2" height="2" fill="#7c7c7c"/>
<rect x="781" y="538" width="2" height="2" fill="#7c7c7c"/>
<rect x="781" y="550" width="2" height="2" fill="#7c7c7c"/>
<rect x="781" y="562" width="2" height="2" fill="#7c7c7c"/>
<rect x="781" y="574" width="2" height="2" fill="#7c7c7c"/>
<rect x="781" y="586" width="2" height="2" fill="#7c7c7c"/>
<rect x="781" y="598" width="2" height="2" fill="#7c7c7c"/>
<rect x="781" y="610" width="2" height="2" fill="#7c7c7c"/>
<rect x="841" y="34" width="2" height="2" fill="#7c7c7c"/>
<rect x="841" y="46" width="2" height="2" fill="#7c7c7c"/>
<rect x="841" y="58" width="2" height="2" fill="#7c7c7c"/>
<rect x="841" y="70" width="2" height="2" fill="#7c7c7c"/>
<rect x="841" y="82" width="2" height="2" fill="#7c7c7c"/>
<rect x="841" y="94" width="2" height="2" fill="#7c7c7c"/>
<rect x="841" y="106" width="2" height="2" fill="#7c7c7c"/>
<rect x="841" y="118" width="2" height="2" fill="#7c7c7c"/>
<rect x="841" y="130" width="2" height="2" fill="#7c7c7c"/>
<rect x="841" y="142" width="2" height="2" fill="#7c7c7c"/>
<rect x="841" y="154" width="2" height="2" fill="#7c7c7c"/>
<rect x="841" y="166" width="2" height="2" fill="#7c7c7c"/>
<rect x="841" y="178" width="2" height="2" fill="#7c7c7c"/>
<rect x="841" y="190" width="2" height="2" fill="#7c7c7c"/>
<rect x="841" y="202" width="2" height="2" fill="#7c7c7c"/>
<rect x="841" y="214" width="2" height="2" fill="#7c7c7c"/>
<rect x="841" y="226" width="2" height="2" fill="#7c7c7c"/>
<rect x="841" y="238" width="2" height="2" fill="#7c7c7c"/>
<rect x="841" y="250" width="2" height="2" fill="#7c7c7c"/>
<rect x="841" y="262" width="2" height="2" fill="#7c7c7c"/>
<rect x="841" y="274" width="2" height="2" fill="#7c7c7c"/>
<rect x="841" y="286" width="2" height="2" fill="#7c7c7c"/>
<rect x="841" y="298" width="2" height="2" fill="#7c7c7c"/>
<rect x="841" y="310" width="2" height="2" fill="#7c7c7c"/>
<rect x="841" y="322" width="2" height="2" fill="#7c7c7c"/>
<rect x="841" y="334" width="2" height="2" fill="#7c7c7c"/>
<rect x="841" y="346" width="2" height="2" fill="#7c7c7c"/>
<rect x="841" y="358" width="2" height="2" fill="#7c7c7c"/>
<rect x="841" y="370" width="2" height="2" fill="#7c7c7c"/>
<rect x="841" y="382" width="2" height="2" fill="#7c7c7c"/>
<rect x="841" y="394" width="2" height="2" fill="#7c7c7c"/>
<rect x="841" y="406" width="2" height="2" fill="#7c7c7c"/>
<rect x="841" y="418" width="2" height="2" fill="#7c7c7c"/>
<rect x="841" y="430" width="2" height="2" fill="#7c7c7c"/>
<rect x="841" y="442" width="2" height="2" fill="#7c7c7c"/>
<rect x="841" y="454" width="2" height="2" fill="#7c7c7c"/>
<rect x="841" y="466" width="2" height="2" fill="#7c7c7c"/>
<rect x="841" y="478" width="2" height="2" fill="#7c7c7c"/>
<rect x="841" y="490" width="2" height="2" fill="#7c7c7c"/>
<rect x="841" y="502" width="2" height="2" fill="#7c7c7c"/>
<rect x="841" y="514" width="2" height="2" fill="#7c7c7c"/>
<rect x="841" y="526" width="2" height="2" fill="#7c7c7c"/>
<rect x="841" y="538" width="2" height="2" fill="#7c7c7c"/>
<rect x="841" y="550" width="2" height="2" fill="#7c7c7c"/>
<rect x="841" y="562" width="2" height="2" fill="#7c7c7c"/>
<rect x="841" y="574" width="2" height="2" fill="#7c7c7c"/>
<rect x="841" y="586" width="2" height="2" fill="#7c7c7c"/>
<rect x="841" y="598" width="2" height="2" fill="#7c7c7c"/>
<rect x="841" y="610" width="2" height="2" fill="#7c7c7c"/>
<rect x="901" y="34" width="2" height="2" fill="#7c7c7c"/>
<rect x="901" y="46" width="2" height="2" fill="#7c7c7c"/>
<rect x="901" y="58" width="2" height="2" fill="#7c7c7c"/>
<rect x="901" y="70" width="2" height="2" fill="#7c7c7c"/>
<rect x="901" y="82" width="2" height="2" fill="#7c7c7c"/>
<rect x="901" y="94" width="2" height="2" fill="#7c7c7c"/>
<rect x="901" y="106" width="2" height="2" fill="#7c7c7c"/>
<rect x="901" y="118" width="2" height="2" fill="#7c7c7c"/>
<rect x="901" y="130" width="2" height="2" fill="#7c7c7c"/>
<rect x="901" y="142" width="2" height="2" fill="#7c7c7c"/>
<rect x="901" y="154" width="2" height="2" fill="#7c7c7c"/>
<rect x="901" y="166" width="2" height="2" fill="#7c7c7c"/>
<rect x="901" y="178" width="2" height="2" fill="#7c7c7c"/>
<rect x="901" y="190" width="2" height="2" fill="#7c7c7c"/>
<rect x="901" y="202" width="2" height="2" fill="#7c7c7c"/>
<rect x="901" y="214" width="2" height="2" fill="#7c7c7c"/>
<rect x="901" y="226" width="2" height="2" fill="#7c7c7c"/>
<rect x="901" y="238" width="2" height="2" fill="#7c7c7c"/>
<rect x="901" y="250" width="2" height="2" fill="#7c7c7c"/>
<rect x="901" y="262" width="2" height="2" fill="#7c7c7c"/>
<rect x="901" y="274" width="2" height="2" fill="#7c7c7c"/>
<rect x="901" y="286" width="2" height="2" fill="#7c7c7c"/>
<rect x="901" y="298" width="2" height="2" fill="#7c7c7c"/>
<rect x="901" y="310" width="2" height="2" fill="#7c7c7c"/>
<rect x="901" y="322" width="2" height="2" fill="#7c7c7c"/>
<rect x="901" y="334" width="2" height="2" fill="#7c7c7c"/>
<rect x="901" y="346" width="2" height="2" fill="#7c7c7c"/>
<rect x="901" y="358" width="2" height="2" fill="#7c7c7c"/>
<rect x="901" y="370" width="2" height="2" fill="#7c7c7c"/>
<rect x="901" y="382" width="2" height="2" fill="#7c7c7c"/>
<rect x="901" y="394" width="2" height="2" fill="#7c7c7c"/>
<rect x="901" y="406" width="2" height="2" fill="#7c7c7c"/>
<rect x="901" y="418" width="2" height="2" fill="#7c7c7c"/>
<rect x="901" y="430" width="2" height="2" fill="#7c7c7c"/>
<rect x="901" y="442" width="2" height="2" fill="#7c7c7c"/>
<rect x="901" y="454" width="2" height="2" fill="#7c7c7c"/>
<rect x="901" y="466" width="2" height="2" fill="#7c7c7c"/>
<rect x="901" y="478" width="2" height="2" fill="#7c7c7c"/>
<rect x="901" y="490" width="2" height="2" fill="#7c7c7c"/>
<rect x="901" y="502" width="2" height="2" fill="#7c7c7c"/>
<rect x="901" y="514" width="2" height="2" fill="#7c7c7c"/>
<rect x="901" y="526" width="2" height="2" fill="#7c7c7c"/>
<rect x="901" y="538" width="2" height="2" fill="#7c7c7c"/>
<rect x="901" y="550" width="2" height="2" fill="#7c7c7c"/>
<rect x="901" y="562" width="2" height="2" fill="#7c7c7c"/>
<rect x="901" y="574" width="2" height="2" fill="#7c7c7c"/>
<rect x="901" y="586" width="2" height="2" fill="#7c7c7c"/>
<rect x="901" y="598" width="2" height="2" fill="#7c7c7c"/>
<rect x="901" y="610" width="2" height="2" fill="#7c7c7c"/>
<rect x="37" y="82" width="2" height="2" fill="#7c7c7c"/>
<rect x="49" y="82" width="2" height="2" fill="#7c7c7c"/>
<rect x="73" y="82" width="2" height="2" fill="#7c7c7c"/>
<rect x="85" y="82" width="2" height="2" fill="#7c7c7c"/>
<rect x="97" y="82" width="2" height="2" fill="#7c7c7c"/>
<rect x="109" y="82" width="2" height="2" fill="#7c7c7c"/>
<rect x="133" y="82" width="2" height="2" fill="#7c7c7c"/>
<rect x="145" y="82" width="2" height="2" fill="#7c7c7c"/>
<rect x="157" y="82" width="2" height="2" fill="#7c7c7c"/>
<rect x="169" y="82" width="2" height="2" fill="#7c7c7c"/>
<rect x="193" y="82" width="2" height="2" fill="#7c7c7c"/>
<rect x="205" y="82" width="2" height="2" fill="#7c7c7c"/>
<rect x="217" y="82" width="2" height="2" fill="#7c7c7c"/>
<rect x="229" y="82" width="2" height="2" fill="#7c7c7c"/>
<rect x="253" y="82" width="2" height="2" fill="#7c7c7c"/>
<rect x="265" y="82" width="2" height="2" fill="#7c7c7c"/>
<rect x="277" y="82" width="2" height="2" fill="#7c7c7c"/>
<rect x="289" y="82" width="2" height="2" fill="#7c7c7c"/>
<rect x="313" y="82" width="2" height="2" fill="#7c7c7c"/>
<rect x="325" y="82" width="2" height="2" fill="#7c7c7c"/>
<rect x="337" y="82" width="2" height="2" fill="#7c7c7c"/>
<rect x="349" y="82" width="2" height="2" fill="#7c7c7c"/>
<rect x="373" y="82" width="2" height="2" fill="#7c7c7c"/>
<rect x="385" y="82" width="2" height="2" fill="#7c7c7c"/>
<rect x="397" y="82" width="2" height="2" fill="#7c7c7c"/>
<rect x="409" y="82" width="2" height="2" fill="#7c7c7c"/>
<rect x="433" y="82" width="2" height="2" fill="#7c7c7c"/>
<rect x="445" y="82" width="2" height="2" fill="#7c7c7c"/>
<rect x="457" y="82" width="2" height="2" fill="#7c7c7c"/>
<rect x="469" y="82" width="2" height="2" fill="#7c7c7c"/>
<rect x="493" y="82" width="2" height="2" fill="#7c7c7c"/>
<rect x="505" y="82" width="2" height="2" fill="#7c7c7c"/>
<rect x="517" y="82" width="2" height="2" fill="#7c7c7c"/>
<rect x="529" y="82" width="2" height="2" fill="#7c7c7c"/>
<rect x="553" y="82" width="2" height="2" fill="#7c7c7c"/>
<rect x="565" y="82" width="2" height="2" fill="#7c7c7c"/>
<rect x="577" y="82" width="2" height="2" fill="#7c7c7c"/>
<rect x="589" y="82" width="2" height="2" fill="#7c7c7c"/>
<rect x="613" y="82" width="2" height="2" fill="#7c7c7c"/>
<rect x="625" y="82" width="2" height="2" fill="#7c7c7c"/>
<rect x="637" y="82" width="2" height="2" fill="#7c7c7c"/>
<rect x="649" y="82" width="2" height="2" fill="#7c7c7c"/>
<rect x="673" y="82" width="2" height="2" fill="#7c7c7c"/>
<rect x="685" y="82" width="2" height="2" fill="#7c7c7c"/>
<rect x="697" y="82" width="2" height="2" fill="#7c7c7c"/>
<rect x="709" y="82" width="2" height="2" fill="#7c7c7c"/>
<rect x="733" y="82" width="2" height="2" fill="#7c7c7c"/>
<rect x="745" y="82" width="2" height="2" fill="#7c7c7c"/>
<rect x="757" y="82" width="2" height="2" fill="#7c7c7c"/>
<rect x="769" y="82" width="2" height="2" fill="#7c7c7c"/>
<rect x="793" y="82" width="2" height="2" fill="#7c7c7c"/>
<rect x="805" y="82" width="2" height="2" fill="#7c7c7c"/>
<rect x="817" y="82" width="2" height="2" fill="#7c7c7c"/>
<rect x="829" y="82" width="2" height="2" fill="#7c7c7c"/>
<rect x="853" y="82" width="2" height="2" fill="#7c7c7c"/>
<rect x="865" y="82" width="2" height="2" fill="#7c7c7c"/>
<rect x="877" y="82" width="2" height="2" fill="#7c7c7c"/>
<rect x="889" y="82" width="2" height="2" fill="#7c7c7c"/>
<rect x="913" y="82" width="2" height="2" fill="#7c7c7c"/>
<rect x="925" y="82" width="2" height="2" fill="#7c7c7c"/>
<rect x="37" y="142" width="2" height="2" fill="#7c7c7c"/>
<rect x="49" y="142" width="2" height="2" fill="#7c7c7c"/>
<rect x="73" y="142" width="2" height="2" fill="#7c7c7c"/>
<rect x="85" y="142" width="2" height="2" fill="#7c7c7c"/>
<rect x="97" y="142" width="2" height="2" fill="#7c7c7c"/>
<rect x="109" y="142" width="2" height="2" fill="#7c7c7c"/>
<rect x="133" y="142" width="2" height="2" fill="#7c7c7c"/>
<rect x="145" y="142" width="2" height="2" fill="#7c7c7c"/>
<rect x="157" y="142" width="2" height="2" fill="#7c7c7c"/>
<rect x="169" y="142" width="2" height="2" fill="#7c7c7c"/>
<rect x="193" y="142" width="2" height="2" fill="#7c7c7c"/>
<rect x="205" y="142" width="2" height="2" fill="#7c7c7c"/>
<rect x="217" y="142" width="2" height="2" fill="#7c7c7c"/>
<rect x="229" y="142" width="2" height="2" fill="#7c7c7c"/>
<rect x="253" y="142" width="2" height="2" fill="#7c7c7c"/>
<rect x="265" y="142" width="2" height="2" fill="#7c7c7c"/>
<rect x="277" y="142" width="2" height="2" fill="#7c7c7c"/>
<rect x="289" y="142" width="2" height="2" fill="#7c7c7c"/>
<rect x="313" y="142" width="2" height="2" fill="#7c7c7c"/>
<rect x="325" y="142" width="2" height="2" fill="#7c7c7c"/>
<rect x="337" y="142" width="2" height="2" fill="#7c7c7c"/>
<rect x="349" y="142" width="2" height="2" fill="#7c7c7c"/>
<rect x="373" y="142" width="2" height="2" fill="#7c7c7c"/>
<rect x="385" y="142" width="2" height="2" fill="#7c7c7c"/>
<rect x="397" y="142" width="2" height="2" fill="#7c7c7c"/>
<rect x="409" y="142" width="2" height="2" fill="#7c7c7c"/>
<rect x="433" y="142" width="2" height="2" fill="#7c7c7c"/>
<rect x="445" y="142" width="2" height="2" fill="#7c7c7c"/>
<rect x="457" y="142" width="2" height="2" fill="#7c7c7c"/>
<rect x="469" y="142" width="2" height="2" fill="#7c7c7c"/>
<rect x="493" y="142" width="2" height="2" fill="#7c7c7c"/>
<rect x="505" y="142" width="2" height="2" fill="#7c7c7c"/>
<rect x="517" y="142" width="2" height="2" fill="#7c7c7c"/>
<rect x="529" y="142" width="2" height="2" fill="#7c7c7c"/>
<rect x="553" y="142" width="2" height="2" fill="#7c7c7c"/>
<rect x="565" y="142" width="2" height="2" fill="#7c7c7c"/>
<rect x="577" y="142" width="2" height="2" fill="#7c7c7c"/>
<rect x="589" y="142" width="2" height="2" fill="#7c7c7c"/>
<rect x="613" y="142" width="2" height="2" fill="#7c7c7c"/>
<rect x="625" y="142" width="2" height="2" fill="#7c7c7c"/>
<rect x="637" y="142" width="2" height="2" fill="#7c7c7c"/>
<rect x="649" y="142" width="2" height="2" fill="#7c7c7c"/>
<rect x="673" y="142" width="2" height="2" fill="#7c7c7c"/>
<rect x="685" y="142" width="2" height="2" fill="#7c7c7c"/>
<rect x="697" y="142" width="2" height="2" fill="#7c7c7c"/>
<rect x="709" y="142" width="2" height="2" fill="#7c7c7c"/>
<rect x="733" y="142" width="2" height="2" fill="#7c7c7c"/>
<rect x="745" y="142" width="2" height="2" fill="#7c7c7c"/>
<rect x="757" y="142" width="2" height="2" fill="#7c7c7c"/>
<rect x="769" y="142" width="2" height="2" fill="#7c7c7c"/>
<rect x="793" y="142" width="2" height="2" fill="#7c7c7c"/>
<rect x="805" y="142" width="2" height="2" fill="#7c7c7c"/>
<rect x="817" y="142" width="2" height="2" fill="#7c7c7c"/>
<rect x="829" y="142" width="2" height="2" fill="#7c7c7c"/>
<rect x="853" y="142" width="2" height="2" fill="#7c7c7c"/>
<rect x="865" y="142" width="2" height="2" fill="#7c7c7c"/>
<rect x="877" y="142" width="2" height="2" fill="#7c7c7c"/>
<rect x="889" y="142" width="2" height="2" fill="#7c7c7c"/>
<rect x="913" y="142" width="2" height="2" fill="#7c7c7c"/>
<rect x="925" y="142" width="2" height="2" fill="#7c7c7c"/>
<rect x="37" y="202" width="2" height="2" fill="#7c7c7c"/>
<rect x="49" y="202" width="2" height="2" fill="#7c7c7c"/>
<rect x="73" y="202" width="2" height="2" fill="#7c7c7c"/>
<rect x="85" y="202" width="2" height="2" fill="#7c7c7c"/>
<rect x="97" y="202" width="2" height="2" fill="#7c7c7c"/>
<rect x="109" y="202" width="2" height="2" fill="#7c7c7c"/>
<rect x="133" y="202" width="2" height="2" fill="#7c7c7c"/>
<rect x="145" y="202" width="2" height="2" fill="#7c7c7c"/>
<rect x="157" y="202" width="2" height="2" fill="#7c7c7c"/>
<rect x="169" y="202" width="2" height="2" fill="#7c7c7c"/>
<rect x="193" y="202" width="2" height="2" fill="#7c7c7c"/>
<rect x="205" y="202" width="2" height="2" fill="#7c7c7c"/>
<rect x="217" y="202" width="2" height="2" fill="#7c7c7c"/>
<rect x="229" y="202" width="2" height="2" fill="#7c7c7c"/>
<rect x="253" y="202" width="2" height="2" fill="#7c7c7c"/>
<rect x="265" y="202" width="2" height="2" fill="#7c7c7c"/>
<rect x="277" y="202" width="2" height="2" fill="#7c7c7c"/>
<rect x="289" y="202" width="2" height="2" fill="#7c7c7c"/>
<rect x="313" y="202" width="2" height="2" fill="#7c7c7c"/>
<rect x="325" y="202" width="2" height="2" fill="#7c7c7c"/>
<rect x="337" y="202" width="2" height="2" fill="#7c7c7c"/>
<rect x="349" y="202" width="2" height="2" fill="#7c7c7c"/>
<rect x="373" y="202" width="2" height="2" fill="#7c7c7c"/>
<rect x="385" y="202" width="2" height="2" fill="#7c7c7c"/>
<rect x="397" y="202" width="2" height="2" fill="#7c7c7c"/>
<rect x="409" y="202" width="2" height="2" fill="#7c7c7c"/>
<rect x="433" y="202" width="2" height="2" fill="#7c7c7c"/>
<rect x="445" y="202" width="2" height="2" fill="#7c7c7c"/>
<rect x="457" y="202" width="2" height="2" fill="#7c7c7c"/>
<rect x="469" y="202" width="2" height="2" fill="#7c7c7c"/>
<rect x="493" y="202" width="2" height="2" fill="#7c7c7c"/>
<rect x="505" y="202" width="2" height="2" fill="#7c7c7c"/>
<rect x="517" y="202" width="2" height="2" fill="#7c7c7c"/>
<rect x="529" y="202" width="2" height="2" fill="#7c7c7c"/>
<rect x="553" y="202" width="2" height="2" fill="#7c7c7c"/>
<rect x="565" y="202" width="2" height="2" fill="#7c7c7c"/>
<rect x="577" y="202" width="2" height="2" fill="#7c7c7c"/>
<rect x="589" y="202" width="2" height="2" fill="#7c7c7c"/>
<rect x="613" y="202" width="2" height="2" fill="#7c7c7c"/>
<rect x="625" y="202" width="2" height="2" fill="#7c7c7c"/>
<rect x="637" y="202" width="2" height="2" fill="#7c7c7c"/>
<rect x="649" y="202" width="2" height="2" fill="#7c7c7c"/>
<rect x="673" y="202" width="2" height="2" fill="#7c7c7c"/>
<rect x="685" y="202" width="2" height="2" fill="#7c7c7c"/>
<rect x="697" y="202" width="2" height="2" fill="#7c7c7c"/>
<rect x="709" y="202" width="2" height="2" fill="#7c7c7c"/>
<rect x="733" y="202" width="2" height="2" fill="#7c7c7c"/>
<rect x="745" y="202" width="2" height="2" fill="#7c7c7c"/>
<rect x="757" y="202" width="2" height="2" fill="#7c7c7c"/>
<rect x="769" y="202" width="2" height="2" fill="#7c7c7c"/>
<rect x="793" y="202" width="2" height="2" fill="#7c7c7c"/>
<rect x="805" y="202" width="2" height="2" fill="#7c7c7c"/>
<rect x="817" y="202" width="2" height="2" fill="#7c7c7c"/>
<rect x="829" y="202" width="2" height="2" fill="#7c7c7c"/>
<rect x="853" y="202" width="2" height="2" fill="#7c7c7c"/>
<rect x="865" y="202" width="2" height="2" fill="#7c7c7c"/>
<rect x="877" y="202" width="2" height="2" fill="#7c7c7c"/>
<rect x="889" y="202" width="2" height="2" fill="#7c7c7c"/>
<rect x="913" y="202" width="2" height="2" fill="#7c7c7c"/>
<rect x="925" y="202" width="2" height="2" fill="#7c7c7c"/>
<rect x="37" y="262" width="2" height="2" fill="#7c7c7c"/>
<rect x="49" y="262" width="2" height="2" fill="#7c7c7c"/>
<rect x="73" y="262" width="2" height="2" fill="#7c7c7c"/>
<rect x="85" y="262" width="2" height="2" fill="#7c7c7c"/>
<rect x="97" y="262" width="2" height="2" fill="#7c7c7c"/>
<rect x="109" y="262" width="2" height="2" fill="#7c7c7c"/>
<rect x="133" y="262" width="2" height="2" fill="#7c7c7c"/>
<rect x="145" y="262" width="2" height="2" fill="#7c7c7c"/>
<rect x="157" y="262" width="2" height="2" fill="#7c7c7c"/>
<rect x="169" y="262" width="2" height="2" fill="#7c7c7c"/>
<rect x="193" y="262" width="2" height="2" fill="#7c7c7c"/>
<rect x="205" y="262" width="2" height="2" fill="#7c7c7c"/>
<rect x="217" y="262" width="2" height="2" fill="#7c7c7c"/>
<rect x="229" y="262" width="2" height="2" fill="#7c7c7c"/>
<rect x="253" y="262" width="2" height="2" fill="#7c7c7c"/>
<rect x="265" y="262" width="2" height="2" fill="#7c7c7c"/>
<rect x="277" y="262" width="2" height="2" fill="#7c7c7c"/>
<rect x="289" y="262" width="2" height="2" fill="#7c7c7c"/>
<rect x="313" y="262" width="2" height="2" fill="#7c7c7c"/>
<rect x="325" y="262" width="2" height="2" fill="#7c7c7c"/>
<rect x="337" y="262" width="2" height="2" fill="#7c7c7c"/>
<rect x="349" y="262" width="2" height="2" fill="#7c7c7c"/>
<rect x="373" y="262" width="2" height="2" fill="#7c7c7c"/>
<rect x="385" y="262" width="2" height="2" fill="#7c7c7c"/>
<rect x="397" y="262" width="2" height="2" fill="#7c7c7c"/>
<rect x="409" y="262" width="2" height="2" fill="#7c7c7c"/>
<rect x="433" y="262" width="2" height="2" fill="#7c7c7c"/>
<rect x="445" y="262" width="2" height="2" fill="#7c7c7c"/>
<rect x="457" y="262" width="2" height="2" fill="#7c7c7c"/>
<rect x="469" y="262" width="2" height="2" fill="#7c7c7c"/>
<rect x="493" y="262" width="2" height="2" fill="#7c7c7c"/>
<rect x="505" y="262" width="2" height="2" fill="#7c7c7c"/>
<rect x="517" y="262" width="2" height="2" fill="#7c7c7c"/>
<rect x="529" y="262" width="2" height="2" fill="#7c7c7c"/>
<rect x="553" y="262" width="2" height="2" fill="#7c7c7c"/>
<rect x="565" y="262" width="2" height="2" fill="#7c7c7c"/>
<rect x="577" y="262" width="2" height="2" fill="#7c7c7c"/>
<rect x="589" y="262" width="2" height="2" fill="#7c7c7c"/>
<rect x="613" y="262" width="2" height="2" fill="#7c7c7c"/>
<rect x="625" y="262" width="2" height="2" fill="#7c7c7c"/>
<rect x="637" y="262" width="2" height="2" fill="#7c7c7c"/>
<rect x="649" y="262" width="2" height="2" fill="#7c7c7c"/>
<rect x="673" y="262" width="2" height="2" fill="#7c7c7c"/>
<rect x="685" y="262" width="2" height="2" fill="#7c7c7c"/>
<rect x="697" y="262" width="2" height="2" fill="#7c7c7c"/>
<rect x="709" y="262" width="2" height="2" fill="#7c7c7c"/>
<rect x="733" y="262" width="2" height="2" fill="#7c7c7c"/>
<rect x="745" y="262" width="2" height="2" fill="#7c7c7c"/>
<rect x="757" y="262" width="2" height="2" fill="#7c7c7c"/>
<rect x="769" y="262" width="2" height="2" fill="#7c7c7c"/>
<rect x="793" y="262" width="2" height="2" fill="#7c7c7c"/>
<rect x="805" y="262" width="2" height="2" fill="#7c7c7c"/>
<rect x="817" y="262" width="2" height="2" fill="#7c7c7c"/>
<rect x="829" y="262" width="2" height="2" fill="#7c7c7c"/>
<rect x="853" y="262" width="2" height="2" fill="#7c7c7c"/>
<rect x="865" y="262" width="2" height="2" fill="#7c7c7c"/>
<rect x="877" y="262" width="2" height="2" fill="#7c7c7c"/>
<rect x="889" y="262" width="2" height="2" fill="#7c7c7c"/>
<rect x="913" y="262" width="2" height="2" fill="#7c7c7c"/>
<rect x="925" y="262" width="2" height="2" fill="#7c7c7c"/>
<rect x="37" y="382" width="2" height="2" fill="#7c7c7c"/>
<rect x="49" y="382" width="2" height="2" fill="#7c7c7c"/>
<rect x="73" y="382" width="2" height="2" fill="#7c7c7c"/>
<rect x="85" y="382" width="2" height="2" fill="#7c7c7c"/>
<rect x="97" y="382" width="2" height="2" fill="#7c7c7c"/>
<rect x="109" y="382" width="2" height="2" fill="#7c7c7c"/>
<rect x="133" y="382" width="2" height="2" fill="#7c7c7c"/>
<rect x="145" y="382" width="2" height="2" fill="#7c7c7c"/>
<rect x="157" y="382" width="2" height="2" fill="#7c7c7c"/>
<rect x="169" y="382" width="2" height="2" fill="#7c7c7c"/>
<rect x="193" y="382" width="2" height="2" fill="#7c7c7c"/>
<rect x="205" y="382" width="2" height="2" fill="#7c7c7c"/>
<rect x="217" y="382" width="2" height="2" fill="#7c7c7c"/>
<rect x="229" y="382" width="2" height="2" fill="#7c7c7c"/>
<rect x="253" y="382" width="2" height="2" fill="#7c7c7c"/>
<rect x="265" y="382" width="2" height="2" fill="#7c7c7c"/>
<rect x="277" y="382" width="2" height="2" fill="#7c7c7c"/>
<rect x="289" y="382" width="2" height="2" fill="#7c7c7c"/>
<rect x="313" y="382" width="2" height="2" fill="#7c7c7c"/>
<rect x="325" y="382" width="2" height="2" fill="#7c7c7c"/>
<rect x="337" y="382" width="2" height="2" fill="#7c7c7c"/>
<rect x="349" y="382" width="2" height="2" fill="#7c7c7c"/>
<rect x="373" y="382" width="2" height="2" fill="#7c7c7c"/>
<rect x="385" y="382" width="2" height="2" fill="#7c7c7c"/>
<rect x="397" y="382" width="2" height="2" fill="#7c7c7c"/>
<rect x="409" y="382" width="2" height="2" fill="#7c7c7c"/>
<rect x="433" y="382" width="2" height="2" fill="#7c7c7c"/>
<rect x="445" y="382" width="2" height="2" fill="#7c7c7c"/>
<rect x="457" y="382" width="2" height="2" fill="#7c7c7c"/>
<rect x="469" y="382" width="2" height="2" fill="#7c7c7c"/>
<rect x="493" y="382" width="2" height="2" fill="#7c7c7c"/>
<rect x="505" y="382" width="2" height="2" fill="#7c7c7c"/>
<rect x="517" y="382" width="2" height="2" fill="#7c7c7c"/>
<rect x="529" y="382" width="2" height="2" fill="#7c7c7c"/>
<rect x="553" y="382" width="2" height="2" fill="#7c7c7c"/>
<rect x="565" y="382" width="2" height="2" fill="#7c7c7c"/>
<rect x="577" y="382" width="2" height="2" fill="#7c7c7c"/>
<rect x="589" y="382" width="2" height="2" fill="#7c7c7c"/>
<rect x="613" y="382" width="2" height="2" fill="#7c7c7c"/>
<rect x="625" y="382" width="2" height="2" fill="#7c7c7c"/>
<rect x="637" y="382" width="2" height="2" fill="#7c7c7c"/>
<rect x="649" y="382" width="2" height="2" fill="#7c7c7c"/>
<rect x="673" y="382" width="2" height="2" fill="#7c7c7c"/>
<rect x="685" y="382" width="2" height="2" fill="#7c7c7c"/>
<rect x="697" y="382" width="2" height="2" fill="#7c7c7c"/>
<rect x="709" y="382" width="2" height="2" fill="#7c7c7c"/>
<rect x="733" y="382" width="2" height="2" fill="#7c7c7c"/>
<rect x="745" y="382" width="2" height="2" fill="#7c7c7c"/>
<rect x="757" y="382" width="2" height="2" fill="#7c7c7c"/>
<rect x="769" y="382" width="2" height="2" fill="#7c7c7c"/>
<rect x="793" y="382" width="2" height="2" fill="#7c7c7c"/>
<rect x="805" y="382" width="2" height="2" fill="#7c7c7c"/>
<rect x="817" y="382" width="2" height="2" fill="#7c7c7c"/>
<rect x="829" y="382" width="2" height="2" fill="#7c7c7c"/>
<rect x="853" y="382" width="2" height="2" fill="#7c7c7c"/>
<rect x="865" y="382" width="2" height="2" fill="#7c7c7c"/>
<rect x="877" y="382" width="2" height="2" fill="#7c7c7c"/>
<rect x="889" y="382" width="2" height="2" fill="#7c7c7c"/>
<rect x="913" y="382" width="2" height="2" fill="#7c7c7c"/>
<rect x="925" y="382" width="2" height="2" fill="#7c7c7c"/>
<rect x="37" y="442" width="2" height="2" fill="#7c7c7c"/>
<rect x="49" y="442" width="2" height="2" fill="#7c7c7c"/>
<rect x="73" y="442" width="2" height="2" fill="#7c7c7c"/>
<rect x="85" y="442" width="2" height="2" fill="#7c7c7c"/>
<rect x="97" y="442" width="2" height="2" fill="#7c7c7c"/>
<rect x="109" y="442" width="2" height="2" fill="#7c7c7c"/>
<rect x="133" y="442" width="2" height="2" fill="#7c7c7c"/>
<rect x="145" y="442" width="2" height="2" fill="#7c7c7c"/>
<rect x="157" y="442" width="2" height="2" fill="#7c7c7c"/>
<rect x="169" y="442" width="2" height="2" fill="#7c7c7c"/>
<rect x="193" y="442" width="2" height="2" fill="#7c7c7c"/>
<rect x="205" y="442" width="2" height="2" fill="#7c7c7c"/>
<rect x="217" y="442" width="2" height="2" fill="#7c7c7c"/>
<rect x="229" y="442" width="2" height="2" fill="#7c7c7c"/>
<rect x="253" y="442" width="2" height="2" fill="#7c7c7c"/>
<rect x="265" y="442" width="2" height="2" fill="#7c7c7c"/>
<rect x="277" y="442" width="2" height="2" fill="#7c7c7c"/>
<rect x="289" y="442" width="2" height="2" fill="#7c7c7c"/>
<rect x="313" y="442" width="2" height="2" fill="#7c7c7c"/>
<rect x="325" y="442" width="2" height="2" fill="#7c7c7c"/>
<rect x="337" y="442" width="2" height="2" fill="#7c7c7c"/>
<rect x="349" y="442" width="2" height="2" fill="#7c7c7c"/>
<rect x="373" y="442" width="2" height="2" fill="#7c7c7c"/>
<rect x="385" y="442" width="2" height="2" fill="#7c7c7c"/>
<rect x="397" y="442" width="2" height="2" fill="#7c7c7c"/>
<rect x="409" y="442" width="2" height="2" fill="#7c7c7c"/>
<rect x="433" y="442" width="2" height="2" fill="#7c7c7c"/>
<rect x="445" y="442" width="2" height="2" fill="#7c7c7c"/>
<rect x="457" y="442" width="2" height="2" fill="#7c7c7c"/>
<rect x="469" y="442" width="2" height="2" fill="#7c7c7c"/>
<rect x="493" y="442" width="2" height="2" fill="#7c7c7c"/>
<rect x="505" y="442" width="2" height="2" fill="#7c7c7c"/>
<rect x="517" y="442" width="2" height="2" fill="#7c7c7c"/>
<rect x="529" y="442" width="2" height="2" fill="#7c7c7c"/>
<rect x="553" y="442" width="2" height="2" fill="#7c7c7c"/>
<rect x="565" y="442" width="2" height="2" fill="#7c7c7c"/>
<rect x="577" y="442" width="2" height="2" fill="#7c7c7c"/>
<rect x="589" y="442" width="2" height="2" fill="#7c7c7c"/>
<rect x="613" y="442" width="2" height="2" fill="#7c7c7c"/>
<rect x="625" y="442" width="2" height="2" fill="#7c7c7c"/>
<rect x="637" y="442" width="2" height="2" fill="#7c7c7c"/>
<rect x="649" y="442" width="2" height="2" fill="#7c7c7c"/>
<rect x="673" y="442" width="2" height="2" fill="#7c7c7c"/>
<rect x="685" y="442" width="2" height="2" fill="#7c7c7c"/>
<rect x="697" y="442" width="2" height="2" fill="#7c7c7c"/>
<rect x="709" y="442" width="2" height="2" fill="#7c7c7c"/>
<rect x="733" y="442" width="2" height="2" fill="#7c7c7c"/>
<rect x="745" y="442" width="2" height="2" fill="#7c7c7c"/>
<rect x="757" y="442" width="2" height="2" fill="#7c7c7c"/>
<rect x="769" y="442" width="2" height="2" fill="#7c7c7c"/>
<rect x="793" y="442" width="2" height="2" fill="#7c7c7c"/>
<rect x="805" y="442" width="2" height="2" fill="#7c7c7c"/>
<rect x="817" y="442" width="2" height="2" fill="#7c7c7c"/>
<rect x="829" y="442" width="2" height="2" fill="#7c7c7c"/>
<rect x="853" y="442" width="2" height="2" fill="#7c7c7c"/>
<rect x="865" y="442" width="2" height="2" fill="#7c7c7c"/>
<rect x="877" y="442" width="2" height="2" fill="#7c7c7c"/>
<rect x="889" y="442" width="2" height="2" fill="#7c7c7c"/>
<rect x="913" y="442" width="2" height="2" fill="#7c7c7c"/>
<rect x="925" y="442" width="2" height="2" fill="#7c7c7c"/>
<rect x="37" y="502" width="2" height="2" fill="#7c7c7c"/>
<rect x="49" y="502" width="2" height="2" fill="#7c7c7c"/>
<rect x="73" y="502" width="2" height="2" fill="#7c7c7c"/>
<rect x="85" y="502" width="2" height="2" fill="#7c7c7c"/>
<rect x="97" y="502" width="2" height="2" fill="#7c7c7c"/>
<rect x="109" y="502" width="2" height="2" fill="#7c7c7c"/>
<rect x="133" y="502" width="2" height="2" fill="#7c7c7c"/>
<rect x="145" y="502" width="2" height="2" fill="#7c7c7c"/>
<rect x="157" y="502" width="2" height="2" fill="#7c7c7c"/>
<rect x="169" y="502" width="2" height="2" fill="#7c7c7c"/>
<rect x="193" y="502" width="2" height="2" fill="#7c7c7c"/>
<rect x="205" y="502" width="2" height="2" fill="#7c7c7c"/>
<rect x="217" y="502" width="2" height="2" fill="#7c7c7c"/>
<rect x="229" y="502" width="2" height="2" fill="#7c7c7c"/>
<rect x="253" y="502" width="2" height="2" fill="#7c7c7c"/>
<rect x="265" y="502" width="2" height="2" fill="#7c7c7c"/>
<rect x="277" y="502" width="2" height="2" fill="#7c7c7c"/>
<rect x="289" y="502" width="2" height="2" fill="#7c7c7c"/>
<rect x="313" y="502" width="2" height="2" fill="#7c7c7c"/>
<rect x="325" y="502" width="2" height="2" fill="#7c7c7c"/>
<rect x="337" y="502" width="2" height="2" fill="#7c7c7c"/>
<rect x="349" y="502" width="2" height="2" fill="#7c7c7c"/>
<rect x="373" y="502" width="2" height="2" fill="#7c7c7c"/>
<rect x="385" y="502" width="2" height="2" fill="#7c7c7c"/>
<rect x="397" y="502" width="2" height="2" fill="#7c7c7c"/>
<rect x="409" y="502" width="2" height="2" fill="#7c7c7c"/>
<rect x="433" y="502" width="2" height="2" fill="#7c7c7c"/>
<rect x="445" y="502" width="2" height="2" fill="#7c7c7c"/>
<rect x="457" y="502" width="2" height="2" fill="#7c7c7c"/>
<rect x="469" y="502" width="2" height="2" fill="#7c7c7c"/>
<rect x="493" y="502" width="2" height="2" fill="#7c7c7c"/>
<rect x="505" y="502" width="2" height="2" fill="#7c7c7c"/>
<rect x="517" y="502" width="2" height="2" fill="#7c7c7c"/>
<rect x="529" y="502" width="2" height="2" fill="#7c7c7c"/>
<rect x="553" y="502" width="2" height="2" fill="#7c7c7c"/>
<rect x="565" y="502" width="2" height="2" fill="#7c7c7c"/>
<rect x="577" y="502" width="2" height="2" fill="#7c7c7c"/>
<rect x="589" y="502" width="2" height="2" fill="#7c7c7c"/>
<rect x="613" y="502" width="2" height="2" fill="#7c7c7c"/>
<rect x="625" y="502" width="2" height="2" fill="#7c7c7c"/>
<rect x="637" y="502" width="2" height="2" fill="#7c7c7c"/>
<rect x="649" y="502" width="2" height="2" fill="#7c7c7c"/>
<rect x="673" y="502" width="2" height="2" fill="#7c7c7c"/>
<rect x="685" y="502" width="2" height="2" fill="#7c7c7c"/>
<rect x="697" y="502" width="2" height="2" fill="#7c7c7c"/>
<rect x="709" y="502" width="2" height="2" fill="#7c7c7c"/>
<rect x="733" y="502" width="2" height="2" fill="#7c7c7c"/>
<rect x="745" y="502" width="2" height="2" fill="#7c7c7c"/>
<rect x="757" y="502" width="2" height="2" fill="#7c7c7c"/>
<rect x="769" y="502" width="2" height="2" fill="#7c7c7c"/>
<rect x="793" y="502" width="2" height="2" fill="#7c7c7c"/>
<rect x="805" y="502" width="2" height="2" fill="#7c7c7c"/>
<rect x="817" y="502" width="2" height="2" fill="#7c7c7c"/>
<rect x="829" y="502" width="2" height="2" fill="#7c7c7c"/>
<rect x="853" y="502" width="2" height="2" fill="#7c7c7c"/>
<rect x="865" y="502" width="2" height="2" fill="#7c7c7c"/>
<rect x="877" y="502" width="2" height="2" fill="#7c7c7c"/>
<rect x="889" y="502" width="2" height="2" fill="#7c7c7c"/>
<rect x="913" y="502" width="2" height="2" fill="#7c7c7c"/>
<rect x="925" y="502" width="2" height="2" fill="#7c7c7c"/>
<rect x="37" y="562" width="2" height="2" fill="#7c7c7c"/>
<rect x="49" y="562" width="2" height="2" fill="#7c7c7c"/>
<rect x="73" y="562" width="2" height="2" fill="#7c7c7c"/>
<rect x="85" y="562" width="2" height="2" fill="#7c7c7c"/>
<rect x="97" y="562" width="2" height="2" fill="#7c7c7c"/>
<rect x="109" y="562" width="2" height="2" fill="#7c7c7c"/>
<rect x="133" y="562" width="2" height="2" fill="#7c7c7c"/>
<rect x="145" y="562" width="2" height="2" fill="#7c7c7c"/>
<rect x="157" y="562" width="2" height="2" fill="#7c7c7c"/>
<rect x="169" y="562" width="2" height="2" fill="#7c7c7c"/>
<rect x="193" y="562" width="2" height="2" fill="#7c7c7c"/>
<rect x="205" y="562" width="2" height="2" fill="#7c7c7c"/>
<rect x="217" y="562" width="2" height="2" fill="#7c7c7c"/>
<rect x="229" y="562" width="2" height="2" fill="#7c7c7c"/>
<rect x="253" y="562" width="2" height="2" fill="#7c7c7c"/>
<rect x="265" y="562" width="2" height="2" fill="#7c7c7c"/>
<rect x="277" y="562" width="2" height="2" fill="#7c7c7c"/>
<rect x="289" y="562" width="2" height="2" fill="#7c7c7c"/>
<rect x="313" y="562" width="2" height="2" fill="#7c7c7c"/>
<rect x="325" y="562" width="2" height="2" fill="#7c7c7c"/>
<rect x="337" y="562" width="2" height="2" fill="#7c7c7c"/>
<rect x="349" y="562" width="2" height="2" fill="#7c7c7c"/>
<rect x="373" y="562" width="2" height="2" fill="#7c7c7c"/>
<rect x="385" y="562" width="2" height="2" fill="#7c7c7c"/>
<rect x="397" y="562" width="2" height="2" fill="#7c7c7c"/>
<rect x="409" y="562" width="2" height="2" fill="#7c7c7c"/>
<rect x="433" y="562" width="2" height="2" fill="#7c7c7c"/>
<rect x="445" y="562" width="2" height="2" fill="#7c7c7c"/>
<rect x="457" y="562" width="2" height="2" fill="#7c7c7c"/>
<rect x="469" y="562" width="2" height="2" fill="#7c7c7c"/>
<rect x="493" y="562" width="2" height="2" fill="#7c7c7c"/>
<rect x="505" y="562" width="2" height="2" fill="#7c7c7c"/>
<rect x="517" y="562" width="2" height="2" fill="#7c7c7c"/>
<rect x="529" y="562" width="2" height="2" fill="#7c7c7c"/>
<rect x="553" y="562" width="2" height="2" fill="#7c7c7c"/>
<rect x="565" y="562" width="2" height="2" fill="#7c7c7c"/>
<rect x="577" y="562" width="2" height="2" fill="#7c7c7c"/>
<rect x="589" y="562" width="2" height="2" fill="#7c7c7c"/>
<rect x="613" y="562" width="2" height="2" fill="#7c7c7c"/>
<rect x="625" y="562" width="2" height="2" fill="#7c7c7c"/>
<rect x="637" y="562" width="2" height="2" fill="#7c7c7c"/>
<rect x="649" y="562" width="2" height="2" fill="#7c7c7c"/>
<rect x="673" y="562" width="2" height="2" fill="#7c7c7c"/>
<rect x="685" y="562" width="2" height="2" fill="#7c7c7c"/>
<rect x="697" y="562" width="2" height="2" fill="#7c7c7c"/>
<rect x="709" y="562" width="2" height="2" fill="#7c7c7c"/>
<rect x="733" y="562" width="2" height="2" fill="#7c7c7c"/>
<rect x="745" y="562" width="2" height="2" fill="#7c7c7c"/>
<rect x="757" y="562" width="2" height="2" fill="#7c7c7c"/>
<rect x="769" y="562" width="2" height="2" fill="#7c7c7c"/>
<rect x="793" y="562" width="2" height="2" fill="#7c7c7c"/>
<rect x="805" y="562" width="2" height="2" fill="#7c7c7c"/>
<rect x="817" y="562" width="2" height="2" fill="#7c7c7c"/>
<rect x="829" y="562" width="2" height="2" fill="#7c7c7c"/>
<rect x="853" y="562" width="2" height="2" fill="#7c7c7c"/>
<rect x="865" y="562" width="2" height="2" fill="#7c7c7c"/>
<rect x="877" y="562" width="2" height="2" fill="#7c7c7c"/>
<rect x="889" y="562" width="2" height="2" fill="#7c7c7c"/>
<rect x="913" y="562" width="2" height="2" fill="#7c7c7c"/>
<rect x="925" y="562" width="2" height="2" fill="#7c7c7c"/>
<rect x="480" y="34" width="4" height="2" fill="#c8c8c8"/>
<rect x="480" y="46" width="4" height="2" fill="#c8c8c8"/>
<rect x="480" y="58" width="4" height="2" fill="#c8c8c8"/>
<rect x="480" y="70" width="4" height="2" fill="#c8c8c8"/>
<rect x="480" y="82" width="4" height="2" fill="#c8c8c8"/>
<rect x="480" y="94" width="4" height="2" fill="#c8c8c8"/>
<rect x="480" y="106" width="4" height="2" fill="#c8c8c8"/>
<rect x="480" y="118" width="4" height="2" fill="#c8c8c8"/>
<rect x="480" y="130" width="4" height="2" fill="#c8c8c8"/>
<rect x="480" y="142" width="4" height="2" fill="#c8c8c8"/>
<rect x="480" y="154" width="4" height="2" fill="#c8c8c8"/>
<rect x="480" y="166" width="4" height="2" fill="#c8c8c8"/>
<rect x="480" y="178" width="4" height="2" fill="#c8c8c8"/>
<rect x="480" y="190" width="4" height="2" fill="#c8c8c8"/>
<rect x="480" y="202" width="4" height="2" fill="#c8c8c8"/>
<rect x="480" y="214" width="4" height="2" fill="#c8c8c8"/>
<rect x="480" y="226" width="4" height="2" fill="#c8c8c8"/>
<rect x="480" y="238" width="4" height="2" fill="#c8c8c8"/>
<rect x="480" y="250" width="4" height="2" fill="#c8c8c8"/>
<rect x="480" y="262" width="4" height="2" fill="#c8c8c8"/>
<rect x="480" y="274" width="4" height="2" fill="#c8c8c8"/>
<rect x="480" y="286" width="4" height="2" fill="#c8c8c8"/>
<rect x="480" y="298" width="4" height="2" fill="#c8c8c8"/>
<rect x="480" y="310" width="4" height="2" fill="#c8c8c8"/>
<rect x="480" y="322" width="4" height="2" fill="#c8c8c8"/>
<rect x="480" y="334" width="4" height="2" fill="#c8c8c8"/>
<rect x="480" y="346" width="4" height="2" fill="#c8c8c8"/>
<rect x="480" y="358" width="4" height="2" fill="#c8c8c8"/>
<rect x="480" y="370" width="4" height="2" fill="#c8c8c8"/>
<rect x="480" y="382" width="4" height="2" fill="#c8c8c8"/>
<rect x="480" y="394" width="4" height="2" fill="#c8c8c8"/>
<rect x="480" y="406" width="4" height="2" fill="#c8c8c8"/>
<rect x="480" y="418" width="4" height="2" fill="#c8c8c8"/>
<rect x="480" y="430" width="4" height="2" fill="#c8c8c8"/>
<rect x="480" y="442" width="4" height="2" fill="#c8c8c8"/>
<rect x="480" y="454" width="4" height="2" fill="#c8c8c8"/>
<rect x="480" y="466" width="4" height="2" fill="#c8c8c8"/>
<rect x="480" y="478" width="4" height="2" fill="#c8c8c8"/>
<rect x="480" y="490" width="4" height="2" fill="#c8c8c8"/>
<rect x="480" y="502" width="4" height="2" fill="#c8c8c8"/>
<rect x="480" y="514" width="4" height="2" fill="#c8c8c8"/>
<rect x="480" y="526" width="4" height="2" fill="#c8c8c8"/>
<rect x="480" y="538" width="4" height="2" fill="#c8c8c8"/>
<rect x="480" y="550" width="4" height="2" fill="#c8c8c8"/>
<rect x="480" y="562" width="4" height="2" fill="#c8c8c8"/>
<rect x="480" y="574" width="4" height="2" fill="#c8c8c8"/>
<rect x="480" y="586" width="4" height="2" fill="#c8c8c8"/>
<rect x="480" y="598" width="4" height="2" fill="#c8c8c8"/>
<rect x="480" y="610" width="4" height="2" fill="#c8c8c8"/>
<rect x="37" y="25" width="2" height="3" fill="#d8d8d8"/>
<rect x="37" y="618" width="2" height="3" fill="#d8d8d8"/>
<rect x="49" y="25" width="2" height="3" fill="#d8d8d8"/>
<rect x="49" y="618" width="2" height="3" fill="#d8d8d8"/>
<rect x="61" y="25" width="2" height="5" fill="#d8d8d8"/>
<rect x="61" y="616" width="2" height="5" fill="#d8d8d8"/>
<rect x="73" y="25" width="2" height="3" fill="#d8d8d8"/>
<rect x="73" y="618" width="2" height="3" fill="#d8d8d8"/>
<rect x="85" y="25" width="2" height="3" fill="#d8d8d8"/>
<rect x="85" y="618" width="2" height="3" fill="#d8d8d8"/>
<rect x="97" y="25" width="2" height="3" fill="#d8d8d8"/>
<rect x="97" y="618" width="2" height="3" fill="#d8d8d8"/>
<rect x="109" y="25" width="2" height="3" fill="#d8d8d8"/>
<rect x="109" y="618" width="2" height="3" fill="#d8d8d8"/>
<rect x="121" y="25" width="2" height="5" fill="#d8d8d8"/>
<rect x="121" y="616" width="2" height="5" fill="#d8d8d8"/>
<rect x="133" y="25" width="2" height="3" fill="#d8d8d8"/>
<rect x="133" y="618" width="2" height="3" fill="#d8d8d8"/>
<rect x="145" y="25" width="2" height="3" fill="#d8d8d8"/>
<rect x="145" y="618" width="2" height="3" fill="#d8d8d8"/>
<rect x="157" y="25" width="2" height="3" fill="#d8d8d8"/>
<rect x="157" y="618" width="2" height="3" fill="#d8d8d8"/>
<rect x="169" y="25" width="2" height="3" fill="#d8d8d8"/>
<rect x="169" y="618" width="2" height="3" fill="#d8d8d8"/>
<rect x="181" y="25" width="2" height="5" fill="#d8d8d8"/>
<rect x="181" y="616" width="2" height="5" fill="#d8d8d8"/>
<rect x="193" y="25" width="2" height="3" fill="#d8d8d8"/>
<rect x="193" y="618" width="2" height="3" fill="#d8d8d8"/>
<rect x="205" y="25" width="2" height="3" fill="#d8d8d8"/>
<rect x="205" y="618" width="2" height="3" fill="#d8d8d8"/>
<rect x="217" y="25" width="2" height="3" fill="#d8d8d8"/>
<rect x="217" y="618" width="2" height="3" fill="#d8d8d8"/>
<rect x="229" y="25" width="2" height="3" fill="#d8d8d8"/>
<rect x="229" y="618" width="2" height="3" fill="#d8d8d8"/>
<rect x="241" y="25" width="2" height="5" fill="#d8d8d8"/>
<rect x="241" y="616" width="2" height="5" fill="#d8d8d8"/>
<rect x="253" y="25" width="2" height="3" fill="#d8d8d8"/>
<rect x="253" y="618" width="2" height="3" fill="#d8d8d8"/>
<rect x="265" y="25" width="2" height="3" fill="#d8d8d8"/>
<rect x="265" y="618" width="2" height="3" fill="#d8d8d8"/>
<rect x="277" y="25" width="2" height="3" fill="#d8d8d8"/>
<rect x="277" y="618" width="2" height="3" fill="#d8d8d8"/>
<rect x="289" y="25" width="2" height="3" fill="#d8d8d8"/>
<rect x="289" y="618" width="2" height="3" fill="#d8d8d8"/>
<rect x="301" y="25" width="2" height="5" fill="#d8d8d8"/>
<rect x="301" y="616" width="2" height="5" fill="#d8d8d8"/>
<rect x="313" y="25" width="2" height="3" fill="#d8d8d8"/>
<rect x="313" y="618" width="2" height="3" fill="#d8d8d8"/>
<rect x="325" y="25" width="2" height="3" fill="#d8d8d8"/>
<rect x="325" y="618" width="2" height="3" fill="#d8d8d8"/>
<rect x="337" y="25" width="2" height="3" fill="#d8d8d8"/>
<rect x="337" y="618" width="2" height="3" fill="#d8d8d8"/>
<rect x="349" y="25" width="2" height="3" fill="#d8d8d8"/>
<rect x="349" y="618" width="2" height="3" fill="#d8d8d8"/>
<rect x="361" y="25" width="2" height="5" fill="#d8d8d8"/>
<rect x="361" y="616" width="2" height="5" fill="#d8d8d8"/>
<rect x="373" y="25" width="2" height="3" fill="#d8d8d8"/>
<rect x="373" y="618" width="2" height="3" fill="#d8d8d8"/>
<rect x="385" y="25" width="2" height="3" fill="#d8d8d8"/>
<rect x="385" y="618" width="2" height="3" fill="#d8d8d8"/>
<rect x="397" y="25" width="2" height="3" fill="#d8d8d8"/>
<rect x="397" y="618" width="2" height="3" fill="#d8d8d8"/>
<rect x="409" y="25" width="2" height="3" fill="#d8d8d8"/>
<rect x="409" y="618" width="2" height="3" fill="#d8d8d8"/>
<rect x="421" y="25" width="2" height="5" fill="#d8d8d8"/>
<rect x="421" y="616" width="2" height="5" fill="#d8d8d8"/>
<rect x="433" y="25" width="2" height="3" fill="#d8d8d8"/>
<rect x="433" y="618" width="2" height="3" fill="#d8d8d8"/>
<rect x="445" y="25" width="2" height="3" fill="#d8d8d8"/>
<rect x="445" y="618" width="2" height="3" fill="#d8d8d8"/>
<rect x="457" y="25" width="2" height="3" fill="#d8d8d8"/>
<rect x="457" y="618" width="2" height="3" fill="#d8d8d8"/>
<rect x="469" y="25" width="2" height="3" fill="#d8d8d8"/>
<rect x="469" y="618" width="2" height="3" fill="#d8d8d8"/>
<rect x="481" y="25" width="2" height="7" fill="#d8d8d8"/>
<rect x="481" y="614" width="2" height="7" fill="#d8d8d8"/>
<rect x="493" y="25" width="2" height="3" fill="#d8d8d8"/>
<rect x="493" y="618" width="2" height="3" fill="#d8d8d8"/>
<rect x="505" y="25" width="2" height="3" fill="#d8d8d8"/>
<rect x="505" y="618" width="2" height="3" fill="#d8d8d8"/>
<rect x="517" y="25" width="2" height="3" fill="#d8d8d8"/>
<rect x="517" y="618" width="2" height="3" fill="#d8d8d8"/>
<rect x="529" y="25" width="2" height="3" fill="#d8d8d8"/>
<rect x="529" y="618" width="2" height="3" fill="#d8d8d8"/>
<rect x="541" y="25" width="2" height="5" fill="#d8d8d8"/>
<rect x="541" y="616" width="2" height="5" fill="#d8d8d8"/>
<rect x="553" y="25" width="2" height="3" fill="#d8d8d8"/>
<rect x="553" y="618" width="2" height="3" fill="#d8d8d8"/>
<rect x="565" y="25" width="2" height="3" fill="#d8d8d8"/>
<rect x="565" y="618" width="2" height="3" fill="#d8d8d8"/>
<rect x="577" y="25" width="2" height="3" fill="#d8d8d8"/>
<rect x="577" y="618" width="2" height="3" fill="#d8d8d8"/>
<rect x="589" y="25" width="2" height="3" fill="#d8d8d8"/>
<rect x="589" y="618" width="2" height="3" fill="#d8d8d8"/>
<rect x="601" y="25" width="2" height="5" fill="#d8d8d8"/>
<rect x="601" y="616" width="2" height="5" fill="#d8d8d8"/>
<rect x="613" y="25" width="2" height="3" fill="#d8d8d8"/>
<rect x="613" y="618" width="2" height="3" fill="#d8d8d8"/>
<rect x="625" y="25" width="2" height="3" fill="#d8d8d8"/>
<rect x="625" y="618" width="2" height="3" fill="#d8d8d8"/>
<rect x="637" y="25" width="2" height="3" fill="#d8d8d8"/>
<rect x="637" y="618" width="2" height="3" fill="#d8d8d8"/>
<rect x="649" y="25" width="2" height="3" fill="#d8d8d8"/>
<rect x="649" y="618" width="2" height="3" fill="#d8d8d8"/>
<rect x="661" y="25" width="2" height="5" fill="#d8d8d8"/>
<rect x="661" y="616" width="2" height="5" fill="#d8d8d8"/>
<rect x="673" y="25" width="2" height="3" fill="#d8d8d8"/>
<rect x="673" y="618" width="2" height="3" fill="#d8d8d8"/>
<rect x="685" y="25" width="2" height="3" fill="#d8d8d8"/>
<rect x="685" y="618" width="2" height="3" fill="#d8d8d8"/>
<rect x="697" y="25" width="2" height="3" fill="#d8d8d8"/>
<rect x="697" y="618" width="2" height="3" fill="#d8d8d8"/>
<rect x="709" y="25" width="2" height="3" fill="#d8d8d8"/>
<rect x="709" y="618" width="2" height="3" fill="#d8d8d8"/>
<rect x="721" y="25" width="2" height="5" fill="#d8d8d8"/>
<rect x="721" y="616" width="2" height="5" fill="#d8d8d8"/>
<rect x="733" y="25" width="2" height="3" fill="#d8d8d8"/>
<rect x="733" y="618" width="2" height="3" fill="#d8d8d8"/>
<rect x="745" y="25" width="2" height="3" fill="#d8d8d8"/>
<rect x="745" y="618" width="2" height="3" fill="#d8d8d8"/>
<rect x="757" y="25" width="2" height="3" fill="#d8d8d8"/>
<rect x="757" y="618" width="2" height="3" fill="#d8d8d8"/>
<rect x="769" y="25" width="2" height="3" fill="#d8d8d8"/>
<rect x="769" y="618" width="2" height="3" fill="#d8d8d8"/>
<rect x="781" y="25" width="2" height="5" fill="#d8d8d8"/>
<rect x="781" y="616" width="2" height="5" fill="#d8d8d8"/>
<rect x="793" y="25" width="2" height="3" fill="#d8d8d8"/>
<rect x="793" y="618" width="2" height="3" fill="#d8d8d8"/>
<rect x="805" y="25" width="2" height="3" fill="#d8d8d8"/>
<rect x="805" y="618" width="2" height="3" fill="#d8d8d8"/>
<rect x="817" y="25" width="2" height="3" fill="#d8d8d8"/>
<rect x="817" y="618" width="2" height="3" fill="#d8d8d8"/>
<rect x="829" y="25" width="2" height="3" fill="#d8d8d8"/>
<rect x="829" y="618" width="2" height="3" fill="#d8d8d8"/>
<rect x="841" y="25" width="2" height="5" fill="#d8d8d8"/>
<rect x="841" y="616" width="2" height="5" fill="#d8d8d8"/>
<rect x="853" y="25" width="2" height="3" fill="#d8d8d8"/>
<rect x="853" y="618" width="2" height="3" fill="#d8d8d8"/>
<rect x="865" y="25" width="2" height="3" fill="#d8d8d8"/>
<rect x="865" y="618" width="2" height="3" fill="#d8d8d8"/>
<rect x="877" y="25" width="2" height="3" fill="#d8d8d8"/>
<rect x="877" y="618" width="2" height="3" fill="#d8d8d8"/>
<rect x="889" y="25" width="2" height="3" fill="#d8d8d8"/>
<rect x="889" y="618" width="2" height="3" fill="#d8d8d8"/>
<rect x="901" y="25" width="2" height="5" fill="#d8d8d8"/>
<rect x="901" y="616" width="2" height="5" fill="#d8d8d8"/>
<rect x="913" y="25" width="2" height="3" fill="#d8d8d8"/>
<rect x="913" y="618" width="2" height="3" fill="#d8d8d8"/>
<rect x="925" y="25" width="2" height="3" fill="#d8d8d8"/>
<rect x="925" y="618" width="2" height="3" fill="#d8d8d8"/>
<rect x="26" y="34" width="4" height="2" fill="#d8d8d8"/>
<rect x="930" y="34" width="4" height="2" fill="#d8d8d8"/>
<rect x="26" y="46" width="4" height="2" fill="#d8d8d8"/>
<rect x="930" y="46" width="4" height="2" fill="#d8d8d8"/>
<rect x="26" y="58" width="4" height="2" fill="#d8d8d8"/>
<rect x="930" y="58" width="4" height="2" fill="#d8d8d8"/>
<rect x="26" y="70" width="4" height="2" fill="#d8d8d8"/>
<rect x="930" y="70" width="4" height="2" fill="#d8d8d8"/>
<rect x="26" y="82" width="8" height="2" fill="#d8d8d8"/>
<rect x="926" y="82" width="8" height="2" fill="#d8d8d8"/>
<rect x="26" y="94" width="4" height="2" fill="#d8d8d8"/>
<rect x="930" y="94" width="4" height="2" fill="#d8d8d8"/>
<rect x="26" y="106" width="4" height="2" fill="#d8d8d8"/>
<rect x="930" y="106" width="4" height="2" fill="#d8d8d8"/>
<rect x="26" y="118" width="4" height="2" fill="#d8d8d8"/>
<rect x="930" y="118" width="4" height="2" fill="#d8d8d8"/>
<rect x="26" y="130" width="4" height="2" fill="#d8d8d8"/>
<rect x="930" y="130" width="4" height="2" fill="#d8d8d8"/>
<rect x="26" y="142" width="8" height="2" fill="#d8d8d8"/>
<rect x="926" y="142" width="8" height="2" fill="#d8d8d8"/>
<rect x="26" y="154" width="4" height="2" fill="#d8d8d8"/>
<rect x="930" y="154" width="4" height="2" fill="#d8d8d8"/>
<rect x="26" y="166" width="4" height="2" fill="#d8d8d8"/>
<rect x="930" y="166" width="4" height="2" fill="#d8d8d8"/>
<rect x="26" y="178" width="4" height="2" fill="#d8d8d8"/>
<rect x="930" y="178" width="4" height="2" fill="#d8d8d8"/>
<rect x="26" y="190" width="4" height="2" fill="#d8d8d8"/>
<rect x="930" y="190" width="4" height="2" fill="#d8d8d8"/>
<rect x="26" y="202" width="8" height="2" fill="#d8d8d8"/>
<rect x="926" y="202" width="8" height="2" fill="#d8d8d8"/>
<rect x="26" y="214" width="4" height="2" fill="#d8d8d8"/>
<rect x="930" y="214" width="4" height="2" fill="#d8d8d8"/>
<rect x="26" y="226" width="4" height="2" fill="#d8d8d8"/>
<rect x="930" y="226" width="4" height="2" fill="#d8d8d8"/>
<rect x="26" y="238" width="4" height="2" fill="#d8d8d8"/>
<rect x="930" y="238" width="4" height="2" fill="#d8d8d8"/>
<rect x="26" y="250" width="4" height="2" fill="#d8d8d8"/>
<rect x="930" y="250" width="4" height="2" fill="#d8d8d8"/>
<rect x="26" y="262" width="8" height="2" fill="#d8d8d8"/>
<rect x="926" y="262" width="8" height="2" fill="#d8d8d8"/>
<rect x="26" y="274" width="4" height="2" fill="#d8d8d8"/>
<rect x="930" y="274" width="4" height="2" fill="#d8d8d8"/>
<rect x="26" y="286" width="4" height="2" fill="#d8d8d8"/>
<rect x="930" y="286" width="4" height="2" fill="#d8d8d8"/>
<rect x="26" y="298" width="4" height="2" fill="#d8d8d8"/>
<rect x="930" y="298" width="4" height="2" fill="#d8d8d8"/>
<rect x="26" y="310" width="4" height="2" fill="#d8d8d8"/>
<rect x="930" y="310" width="4" height="2" fill="#d8d8d8"/>
<rect x="26" y="322" width="8" height="2" fill="#d8d8d8"/>
<rect x="926" y="322" width="8" height="2" fill="#d8d8d8"/>
<rect x="26" y="334" width="4" height="2" fill="#d8d8d8"/>
<rect x="930" y="334" width="4" height="2" fill="#d8d8d8"/>
<rect x="26" y="346" width="4" height="2" fill="#d8d8d8"/>
<rect x="930" y="346" width="4" height="2" fill="#d8d8d8"/>
<rect x="26" y="358" width="4" height="2" fill="#d8d8d8"/>
<rect x="930" y="358" width="4" height="2" fill="#d8d8d8"/>
<rect x="26" y="370" width="4" height="2" fill="#d8d8d8"/>
<rect x="930" y="370" width="4" height="2" fill="#d8d8d8"/>
<rect x="26" y="382" width="8" height="2" fill="#d8d8d8"/>
<rect x="926" y="382" width="8" height="2" fill="#d8d8d8"/>
<rect x="26" y="394" width="4" height="2" fill="#d8d8d8"/>
<rect x="930" y="394" width="4" height="2" fill="#d8d8d8"/>
<rect x="26" y="406" width="4" height="2" fill="#d8d8d8"/>
<rect x="930" y="406" width="4" height="2" fill="#d8d8d8"/>
<rect x="26" y="418" width="4" height="2" fill="#d8d8d8"/>
<rect x="930" y="418" width="4" height="2" fill="#d8d8d8"/>
<rect x="26" y="430" width="4" height="2" fill="#d8d8d8"/>
<rect x="930" y="430" width="4" height="2" fill="#d8d8d8"/>
<rect x="26" y="442" width="8" height="2" fill="#d8d8d8"/>
<rect x="926" y="442" width="8" height="2" fill="#d8d8d8"/>
<rect x="26" y="454" width="4" height="2" fill="#d8d8d8"/>
<rect x="930" y="454" width="4" height="2" fill="#d8d8d8"/>
<rect x="26" y="466" width="4" height="2" fill="#d8d8d8"/>
<rect x="930" y="466" width="4" height="2" fill="#d8d8d8"/>
<rect x="26" y="478" width="4" height="2" fill="#d8d8d8"/>
<rect x="930" y="478" width="4" height="2" fill="#d8d8d8"/>
<rect x="26" y="490" width="4" height="2" fill="#d8d8d8"/>
<rect x="930" y="490" width="4" height="2" fill="#d8d8d8"/>
<rect x="26" y="502" width="8" height="2" fill="#d8d8d8"/>
<rect x="926" y="502" width="8" height="2" fill="#d8d8d8"/>
<rect x="26" y="514" width="4" height="2" fill="#d8d8d8"/>
<rect x="930" y="514" width="4" height="2" fill="#d8d8d8"/>
<rect x="26" y="526" width="4" height="2" fill="#d8d8d8"/>
<rect x="930" y="526" width="4" height="2" fill="#d8d8d8"/>
<rect x="26" y="538" width="4" height="2" fill="#d8d8d8"/>
<rect x="930" y="538" width="4" height="2" fill="#d8d8d8"/>
<rect x="26" y="550" width="4" height="2" fill="#d8d8d8"/>
<rect x="930" y="550" width="4" height="2" fill="#d8d8d8"/>
<rect x="26" y="562" width="8" height="2" fill="#d8d8d8"/>
<rect x="926" y="562" width="8" height="2" fill="#d8d8d8"/>
<rect x="26" y="574" width="4" height="2" fill="#d8d8d8"/>
<rect x="930" y="574" width="4" height="2" fill="#d8d8d8"/>
<rect x="26" y="586" width="4" height="2" fill="#d8d8d8"/>
<rect x="930" y="586" width="4" height="2" fill="#d8d8d8"/>
<rect x="26" y="598" width="4" height="2" fill="#d8d8d8"/>
<rect x="930" y="598" width="4" height="2" fill="#d8d8d8"/>
<rect x="26" y="610" width="4" height="2" fill="#d8d8d8"/>
<rect x="930" y="610" width="4" height="2" fill="#d8d8d8"/>
<rect x="25" y="24" width="910" height="598" fill="none" stroke="#f4f4f4" stroke-width="2"/>
<rect x="181" y="316" width="1.5" height="14" fill="#b0b0b0"/>
<rect x="26" y="322.1" width="908" height="2.7" fill="#eeee10"/>
<rect x="32" y="320.3" width="1.2" height="3" fill="#eeee10"/>
<rect x="32" y="324" width="1.2" height="3" fill="#eeee10"/>
<rect x="38" y="324" width="1.2" height="3" fill="#eeee10"/>
<rect x="41" y="324" width="1.2" height="3" fill="#eeee10"/>
<rect x="44" y="320.3" width="1.2" height="3" fill="#eeee10"/>
<rect x="46" y="320.3" width="1.2" height="3" fill="#eeee10"/>
<rect x="46" y="324" width="1.2" height="3" fill="#eeee10"/>
<rect x="50" y="320.3" width="1.2" height="3" fill="#eeee10"/>
<rect x="56" y="320.3" width="1.2" height="3" fill="#eeee10"/>
<rect x="60" y="320.3" width="1.2" height="3" fill="#eeee10"/>
<rect x="66" y="320.3" width="1.2" height="3" fill="#eeee10"/>
<rect x="69" y="320.3" width="1.2" height="3" fill="#eeee10"/>
<rect x="69" y="324" width="1.2" height="3" fill="#eeee10"/>
<rect x="71" y="324" width="1.2" height="3" fill="#eeee10"/>
<rect x="77" y="320.3" width="1.2" height="3" fill="#eeee10"/>
<rect x="81" y="320.3" width="1.2" height="3" fill="#eeee10"/>
<rect x="84" y="320.3" width="1.2" height="3" fill="#eeee10"/>
<rect x="87" y="324" width="1.2" height="3" fill="#eeee10"/>
<rect x="91" y="324" width="1.2" height="3" fill="#eeee10"/>
<rect x="94" y="320.3" width="1.2" height="3" fill="#eeee10"/>
<rect x="98" y="320.3" width="1.2" height="3" fill="#eeee10"/>
<rect x="101" y="324" width="1.2" height="3" fill="#eeee10"/>
<rect x="105" y="324" width="1.2" height="3" fill="#eeee10"/>
<rect x="111" y="324" width="1.2" height="3" fill="#eeee10"/>
<rect x="119" y="324" width="1.2" height="3" fill="#eeee10"/>
<rect x="127" y="320.3" width="1.2" height="3" fill="#eeee10"/>
<rect x="131" y="324" width="1.2" height="3" fill="#eeee10"/>
<rect x="135" y="320.3" width="1.2" height="3" fill="#eeee10"/>
<rect x="139" y="324" width="1.2" height="3" fill="#eeee10"/>
<rect x="144" y="324" width="1.2" height="3" fill="#eeee10"/>
<rect x="148" y="324" width="1.2" height="3" fill="#eeee10"/>
<rect x="151" y="320.3" width="1.2" height="3" fill="#eeee10"/>
<rect x="157" y="320.3" width="1.2" height="3" fill="#eeee10"/>
<rect x="162" y="320.3" width="1.2" height="3" fill="#eeee10"/>
<rect x="170" y="320.3" width="1.2" height="3" fill="#eeee10"/>
<rect x="173" y="324" width="1.2" height="3" fill="#eeee10"/>
<rect x="178" y="320.3" width="1.2" height="3" fill="#eeee10"/>
<rect x="183" y="324" width="1.2" height="3" fill="#eeee10"/>
<rect x="191" y="320.3" width="1.2" height="3" fill="#eeee10"/>
<rect x="194" y="320.3" width="1.2" height="3" fill="#eeee10"/>
<rect x="194" y="324" width="1.2" height="3" fill="#eeee10"/>
<rect x="202" y="324" width="1.2" height="3" fill="#eeee10"/>
<rect x="205" y="320.3" width="1.2" height="3" fill="#eeee10"/>
<rect x="209" y="324" width="1.2" height="3" fill="#eeee10"/>
<rect x="217" y="320.3" width="1.2" height="3" fill="#eeee10"/>
<rect x="223" y="324" width="1.2" height="3" fill="#eeee10"/>
<rect x="228" y="320.3" width="1.2" height="3" fill="#eeee10"/>
<rect x="236" y="320.3" width="1.2" height="3" fill="#eeee10"/>
<rect x="239" y="324" width="1.2" height="3" fill="#eeee10"/>
<rect x="243" y="324" width="1.2" height="3" fill="#eeee10"/>
<rect x="246" y="324" width="1.2" height="3" fill="#eeee10"/>
<rect x="252" y="320.3" width="1.2" height="3" fill="#eeee10"/>
<rect x="260" y="320.3" width="1.2" height="3" fill="#eeee10"/>
<rect x="268" y="320.3" width="1.2" height="3" fill="#eeee10"/>
<rect x="272" y="324" width="1.2" height="3" fill="#eeee10"/>
<rect x="278" y="324" width="1.2" height="3" fill="#eeee10"/>
<rect x="282" y="324" width="1.2" height="3" fill="#eeee10"/>
<rect x="287" y="324" width="1.2" height="3" fill="#eeee10"/>
<rect x="293" y="320.3" width="1.2" height="3" fill="#eeee10"/>
<rect x="293" y="324" width="1.2" height="3" fill="#eeee10"/>
<rect x="296" y="320.3" width="1.2" height="3" fill="#eeee10"/>
<rect x="299" y="320.3" width="1.2" height="3" fill="#eeee10"/>
<rect x="303" y="320.3" width="1.2" height="3" fill="#eeee10"/>
<rect x="306" y="320.3" width="1.2" height="3" fill="#eeee10"/>
<rect x="308" y="320.3" width="1.2" height="3" fill="#eeee10"/>
<rect x="313" y="324" width="1.2" height="3" fill="#eeee10"/>
<rect x="318" y="320.3" width="1.2" height="3" fill="#eeee10"/>
<rect x="318" y="324" width="1.2" height="3" fill="#eeee10"/>
<rect x="320" y="324" width="1.2" height="3" fill="#eeee10"/>
<rect x="326" y="320.3" width="1.2" height="3" fill="#eeee10"/>
<rect x="332" y="320.3" width="1.2" height="3" fill="#eeee10"/>
<rect x="338" y="320.3" width="1.2" height="3" fill="#eeee10"/>
<rect x="341" y="320.3" width="1.2" height="3" fill="#eeee10"/>
<rect x="341" y="324" width="1.2" height="3" fill="#eeee10"/>
<rect x="349" y="320.3" width="1.2" height="3" fill="#eeee10"/>
<rect x="354" y="324" width="1.2" height="3" fill="#eeee10"/>
<rect x="357" y="320.3" width="1.2" height="3" fill="#eeee10"/>
<rect x="360" y="324" width="1.2" height="3" fill="#eeee10"/>
<rect x="365" y="324" width="1.2" height="3" fill="#eeee10"/>
<rect x="368" y="324" width="1.2" height="3" fill="#eeee10"/>
<rect x="374" y="320.3" width="1.2" height="3" fill="#eeee10"/>
<rect x="378" y="320.3" width="1.2" height="3" fill="#eeee10"/>
<rect x="378" y="324" width="1.2" height="3" fill="#eeee10"/>
<rect x="383" y="324" width="1.2" height="3" fill="#eeee10"/>
<rect x="386" y="324" width="1.2" height="3" fill="#eeee10"/>
<rect x="394" y="324" width="1.2" height="3" fill="#eeee10"/>
<rect x="398" y="320.3" width="1.2" height="3" fill="#eeee10"/>
<rect x="401" y="324" width="1.2" height="3" fill="#eeee10"/>
<rect x="405" y="324" width="1.2" height="3" fill="#eeee10"/>
<rect x="408" y="324" width="1.2" height="3" fill="#eeee10"/>
<rect x="412" y="320.3" width="1.2" height="3" fill="#eeee10"/>
<rect x="412" y="324" width="1.2" height="3" fill="#eeee10"/>
<rect x="417" y="320.3" width="1.2" height="3" fill="#eeee10"/>
<rect x="419" y="324" width="1.2" height="3" fill="#eeee10"/>
<rect x="423" y="320.3" width="1.2" height="3" fill="#eeee10"/>
<rect x="423" y="324" width="1.2" height="3" fill="#eeee10"/>
<rect x="426" y="324" width="1.2" height="3" fill="#eeee10"/>
<rect x="430" y="324" width="1.2" height="3" fill="#eeee10"/>
<rect x="433" y="320.3" width="1.2" height="3" fill="#eeee10"/>
<rect x="437" y="324" width="1.2" height="3" fill="#eeee10"/>
<rect x="442" y="324" width="1.2" height="3" fill="#eeee10"/>
<rect x="446" y="324" width="1.2" height="3" fill="#eeee10"/>
<rect x="452" y="324" width="1.2" height="3" fill="#eeee10"/>
<rect x="456" y="320.3" width="1.2" height="3" fill="#eeee10"/>
<rect x="464" y="320.3" width="1.2" height="3" fill="#eeee10"/>
<rect x="466" y="320.3" width="1.2" height="3" fill="#eeee10"/>
<rect x="466" y="324" width="1.2" height="3" fill="#eeee10"/>
<rect x="470" y="324" width="1.2" height="3" fill="#eeee10"/>
<rect x="474" y="324" width="1.2" height="3" fill="#eeee10"/>
<rect x="479" y="320.3" width="1.2" height="3" fill="#eeee10"/>
<rect x="484" y="320.3" width="1.2" height="3" fill="#eeee10"/>
<rect x="484" y="324" width="1.2" height="3" fill="#eeee10"/>
<rect x="489" y="320.3" width="1.2" height="3" fill="#eeee10"/>
<rect x="492" y="320.3" width="1.2" height="3" fill="#eeee10"/>
<rect x="496" y="320.3" width="1.2" height="3" fill="#eeee10"/>
<rect x="504" y="324" width="1.2" height="3" fill="#eeee10"/>
<rect x="506" y="324" width="1.2" height="3" fill="#eeee10"/>
<rect x="511" y="324" width="1.2" height="3" fill="#eeee10"/>
<rect x="514" y="324" width="1.2" height="3" fill="#eeee10"/>
<rect x="517" y="320.3" width="1.2" height="3" fill="#eeee10"/>
<rect x="517" y="324" width="1.2" height="3" fill="#eeee10"/>
<rect x="521" y="324" width="1.2" height="3" fill="#eeee10"/>
<rect x="524" y="320.3" width="1.2" height="3" fill="#eeee10"/>
<rect x="529" y="320.3" width="1.2" height="3" fill="#eeee10"/>
<rect x="535" y="324" width="1.2" height="3" fill="#eeee10"/>
<rect x="538" y="324" width="1.2" height="3" fill="#eeee10"/>
<rect x="541" y="320.3" width="1.2" height="3" fill="#eeee10"/>
<rect x="541" y="324" width="1.2" height="3" fill="#eeee10"/>
<rect x="543" y="320.3" width="1.2" height="3" fill="#eeee10"/>
<rect x="551" y="324" width="1.2" height="3" fill="#eeee10"/>
<rect x="554" y="324" width="1.2" height="3" fill="#eeee10"/>
<rect x="562" y="324" width="1.2" height="3" fill="#eeee10"/>
<rect x="567" y="320.3" width="1.2" height="3" fill="#eeee10"/>
<rect x="570" y="320.3" width="1.2" height="3" fill="#eeee10"/>
<rect x="573" y="324" width="1.2" height="3" fill="#eeee10"/>
<rect x="576" y="320.3" width="1.2" height="3" fill="#eeee10"/>
<rect x="580" y="324" width="1.2" height="3" fill="#eeee10"/>
<rect x="584" y="320.3" width="1.2" height="3" fill="#eeee10"/>
<rect x="588" y="320.3" width="1.2" height="3" fill="#eeee10"/>
<rect x="592" y="324" width="1.2" height="3" fill="#eeee10"/>
<rect x="597" y="320.3" width="1.2" height="3" fill="#eeee10"/>
<rect x="603" y="324" width="1.2" height="3" fill="#eeee10"/>
<rect x="605" y="320.3" width="1.2" height="3" fill="#eeee10"/>
<rect x="605" y="324" width="1.2" height="3" fill="#eeee10"/>
<rect x="610" y="324" width="1.2" height="3" fill="#eeee10"/>
<rect x="616" y="324" width="1.2" height="3" fill="#eeee10"/>
<rect x="619" y="324" width="1.2" height="3" fill="#eeee10"/>
<rect x="621" y="324" width="1.2" height="3" fill="#eeee10"/>
<rect x="624" y="324" width="1.2" height="3" fill="#eeee10"/>
<rect x="627" y="320.3" width="1.2" height="3" fill="#eeee10"/>
<rect x="635" y="324" width="1.2" height="3" fill="#eeee10"/>
<rect x="638" y="324" width="1.2" height="3" fill="#eeee10"/>
<rect x="643" y="324" width="1.2" height="3" fill="#eeee10"/>
<rect x="651" y="324" width="1.2" height="3" fill="#eeee10"/>
<rect x="654" y="324" width="1.2" height="3" fill="#eeee10"/>
<rect x="656" y="320.3" width="1.2" height="3" fill="#eeee10"/>
<rect x="660" y="320.3" width="1.2" height="3" fill="#eeee10"/>
<rect x="663" y="324" width="1.2" height="3" fill="#eeee10"/>
<rect x="665" y="324" width="1.2" height="3" fill="#eeee10"/>
<rect x="668" y="320.3" width="1.2" height="3" fill="#eeee10"/>
<rect x="672" y="324" width="1.2" height="3" fill="#eeee10"/>
<rect x="680" y="324" width="1.2" height="3" fill="#eeee10"/>
<rect x="688" y="324" width="1.2" height="3" fill="#eeee10"/>
<rect x="692" y="324" width="1.2" height="3" fill="#eeee10"/>
<rect x="696" y="320.3" width="1.2" height="3" fill="#eeee10"/>
<rect x="696" y="324" width="1.2" height="3" fill="#eeee10"/>
<rect x="700" y="324" width="1.2" height="3" fill="#eeee10"/>
<rect x="703" y="320.3" width="1.2" height="3" fill="#eeee10"/>
<rect x="709" y="320.3" width="1.2" height="3" fill="#eeee10"/>
<rect x="712" y="324" width="1.2" height="3" fill="#eeee10"/>
<rect x="718" y="320.3" width="1.2" height="3" fill="#eeee10"/>
<rect x="722" y="324" width="1.2" height="3" fill="#eeee10"/>
<rect x="725" y="320.3" width="1.2" height="3" fill="#eeee10"/>
<rect x="725" y="324" width="1.2" height="3" fill="#eeee10"/>
<rect x="730" y="320.3" width="1.2" height="3" fill="#eeee10"/>
<rect x="733" y="320.3" width="1.2" height="3" fill="#eeee10"/>
<rect x="733" y="324" width="1.2" height="3" fill="#eeee10"/>
<rect x="737" y="324" width="1.2" height="3" fill="#eeee10"/>
<rect x="740" y="320.3" width="1.2" height="3" fill="#eeee10"/>
<rect x="748" y="320.3" width="1.2" height="3" fill="#eeee10"/>
<rect x="752" y="320.3" width="1.2" height="3" fill="#eeee10"/>
<rect x="758" y="320.3" width="1.2" height="3" fill="#eeee10"/>
<rect x="758" y="324" width="1.2" height="3" fill="#eeee10"/>
<rect x="764" y="320.3" width="1.2" height="3" fill="#eeee10"/>
<rect x="768" y="320.3" width="1.2" height="3" fill="#eeee10"/>
<rect x="771" y="324" width="1.2" height="3" fill="#eeee10"/>
<rect x="773" y="320.3" width="1.2" height="3" fill="#eeee10"/>
<rect x="781" y="320.3" width="1.2" height="3" fill="#eeee10"/>
<rect x="783" y="320.3" width="1.2" height="3" fill="#eeee10"/>
<rect x="787" y="324" width="1.2" height="3" fill="#eeee10"/>
<rect x="790" y="320.3" width="1.2" height="3" fill="#eeee10"/>
<rect x="794" y="320.3" width="1.2" height="3" fill="#eeee10"/>
<rect x="794" y="324" width="1.2" height="3" fill="#eeee10"/>
<rect x="797" y="320.3" width="1.2" height="3" fill="#eeee10"/>
<rect x="801" y="320.3" width="1.2" height="3" fill="#eeee10"/>
<rect x="804" y="320.3" width="1.2" height="3" fill="#eeee10"/>
<rect x="807" y="324" width="1.2" height="3" fill="#eeee10"/>
<rect x="811" y="320.3" width="1.2" height="3" fill="#eeee10"/>
<rect x="819" y="324" width="1.2" height="3" fill="#eeee10"/>
<rect x="822" y="320.3" width="1.2" height="3" fill="#eeee10"/>
<rect x="825" y="320.3" width="1.2" height="3" fill="#eeee10"/>
<rect x="828" y="320.3" width="1.2" height="3" fill="#eeee10"/>
<rect x="830" y="324" width="1.2" height="3" fill="#eeee10"/>
<rect x="834" y="320.3" width="1.2" height="3" fill="#eeee10"/>
<rect x="838" y="320.3" width="1.2" height="3" fill="#eeee10"/>
<rect x="841" y="324" width="1.2" height="3" fill="#eeee10"/>
<rect x="846" y="320.3" width="1.2" height="3" fill="#eeee10"/>
<rect x="846" y="324" width="1.2" height="3" fill="#eeee10"/>
<rect x="852" y="320.3" width="1.2" height="3" fill="#eeee10"/>
<rect x="852" y="324" width="1.2" height="3" fill="#eeee10"/>
<rect x="856" y="324" width="1.2" height="3" fill="#eeee10"/>
<rect x="858" y="324" width="1.2" height="3" fill="#eeee10"/>
<rect x="862" y="320.3" width="1.2" height="3" fill="#eeee10"/>
<rect x="862" y="324" width="1.2" height="3" fill="#eeee10"/>
<rect x="865" y="320.3" width="1.2" height="3" fill="#eeee10"/>
<rect x="868" y="320.3" width="1.2" height="3" fill="#eeee10"/>
<rect x="872" y="324" width="1.2" height="3" fill="#eeee10"/>
<rect x="876" y="320.3" width="1.2" height="3" fill="#eeee10"/>
<rect x="879" y="320.3" width="1.2" height="3" fill="#eeee10"/>
<rect x="881" y="320.3" width="1.2" height="3" fill="#eeee10"/>
<rect x="881" y="324" width="1.2" height="3" fill="#eeee10"/>
<rect x="883" y="320.3" width="1.2" height="3" fill="#eeee10"/>
<rect x="887" y="324" width="1.2" height="3" fill="#eeee10"/>
<rect x="891" y="320.3" width="1.2" height="3" fill="#eeee10"/>
<rect x="891" y="324" width="1.2" height="3" fill="#eeee10"/>
<rect x="894" y="324" width="1.2" height="3" fill="#eeee10"/>
<rect x="900" y="324" width="1.2" height="3" fill="#eeee10"/>
<rect x="906" y="320.3" width="1.2" height="3" fill="#eeee10"/>
<rect x="906" y="324" width="1.2" height="3" fill="#eeee10"/>
<rect x="910" y="324" width="1.2" height="3" fill="#eeee10"/>
<rect x="914" y="320.3" width="1.2" height="3" fill="#eeee10"/>
<rect x="917" y="320.3" width="1.2" height="3" fill="#eeee10"/>
<rect x="922" y="320.3" width="1.2" height="3" fill="#eeee10"/>
<rect x="922" y="324" width="1.2" height="3" fill="#eeee10"/>
<rect x="925" y="320.3" width="1.2" height="3" fill="#eeee10"/>
<rect x="929" y="320.3" width="1.2" height="3" fill="#eeee10"/>
<rect x="931" y="320.3" width="1.2" height="3" fill="#eeee10"/>
<rect x="382.75" y="308" width="1.6" height="15" fill="#eeee10"/>
<rect x="412.25" y="308" width="1.6" height="15" fill="#eeee10"/>
<rect x="440.75" y="308" width="1.6" height="15" fill="#eeee10"/>
<rect x="560.75" y="308" width="1.6" height="15" fill="#eeee10"/>
<rect x="592.25" y="308" width="1.6" height="15" fill="#eeee10"/>
<rect x="617.75" y="308" width="1.6" height="15" fill="#eeee10"/>
</svg>
<svg class="a" style="left:0;top:312px" width="26" height="24" viewBox="0 0 26 24"><path d="M0.8 1.8 H15 L21.8 12 L15 22.2 H0.8 Z" fill="#000" stroke="#d8e030" stroke-width="1.6"/></svg>
<div class="t" style="left:5px;top:315px;color:#e8e800;font-size:19px">2</div>
<!-- bottom left panel -->
<div class="a" style="left:0;top:623px;width:383px;height:97px;background:#68b0b8"></div>
<div class="a" style="left:383px;top:623px;width:577px;height:97px;background:#0080e0"></div>
<div class="a" style="left:383px;top:645px;width:575px;height:72px;background:#0460a0"></div>
<div class="box" style="left:2px;top:624px;width:248px;height:22.4px"></div>
<div class="box" style="left:2px;top:647.6px;width:248px;height:22.2px"></div>
<div class="box" style="left:254px;top:624px;width:126px;height:46px"></div>
<div class="box" style="left:1px;top:673px;width:379px;height:44px;border-radius:0 5px 5px 0"></div>
<div class="circ" style="left:3px;top:626px;width:19px;height:19px;background:#f00000"><svg width="19" height="19" style="position:absolute;left:0;top:0"><path d="M7 8 L9.8 5.4 V14.8" fill="none" stroke="#3a0000" stroke-width="2.4"/></svg></div>
<div class="t" style="left:22px;top:628px;color:#cc1c26">5V-</div>
<div class="t" style="left:126px;top:628px;color:#cc1c26">0.00div</div>
<div class="circ" style="left:3px;top:650px;width:19px;height:19px;background:#e8e820">2</div>
<div class="t" style="left:22px;top:652px;color:#cccc38">2V-</div>
<div class="t" style="left:126px;top:652px;color:#cccc38">0.00div</div>
<div class="t" style="left:256.5px;top:626px;color:#e0e0e0">(1.25KS/s)</div>
<div class="t" style="left:261px;top:650px;color:#e0e0e0">Depth:10K</div>
<div class="circ" style="left:2px;top:675px;width:19px;height:19px;background:#e8e820">2</div>
<div class="t" style="left:24px;top:675px;color:#cccc38">F:  ?</div>
<div class="circ" style="left:2px;top:697px;width:19px;height:19px;background:#e8e820">2</div>
<div class="t" style="left:24px;top:698px;color:#cccc38">+D:  ?</div>
<div class="circ" style="left:192px;top:675px;width:19px;height:19px;background:#e8e820">2</div>
<div class="t" style="left:216px;top:675px;color:#cccc38">Vk:41.45mv</div>
<div class="circ" style="left:192px;top:697px;width:19px;height:19px;background:#e8e820">2</div>
<div class="t" style="left:216px;top:698px;color:#cccc38">V:2.158mv</div>
<!-- right panel -->
<div class="pill" style="left:383px;top:623px;width:118px;height:21px;border-radius:11px"></div>
<div class="t" style="left:398px;top:626px;color:#e8e8e8">M:400ms</div>
<div class="pill" style="left:798px;top:623px;width:154px;height:22px;border-radius:11px"></div>
<div class="circ" style="left:801px;top:624px;width:19px;height:19px;background:#f00000"><svg width="19" height="19" style="position:absolute;left:0;top:0"><path d="M7 8 L9.8 5.4 V14.8" fill="none" stroke="#3a0000" stroke-width="2.4"/></svg></div>
<svg class="a" style="left:820px;top:624px" width="28" height="20"><path d="M2 18 H12.5 L17.5 2.5 H26" fill="none" stroke="#e0e0e0" stroke-width="2"/></svg>
<div class="t" style="left:848px;top:626px;color:#e8e8e8">0.00mV</div>
<div class="a" style="left:387px;top:649px;width:107px;height:66px;background:#0a84e6;border-top:2px solid #4aa4ee;border-left:2px solid #3a9ae8;border-bottom:2.5px solid #0a3c90;border-right:2px solid #0a4a9a;border-radius:3px"></div>
<div class="t" style="left:415px;top:659.5px;color:#0a2060;-webkit-text-stroke:0.5px #0a2060">Type</div>
<div class="a" style="left:409px;top:685px;width:60px;height:24px;background:#e8e8e8"></div>
<div class="t" style="left:409px;top:687px;color:#000">Image</div>
<div class="a" style="left:717px;top:649px;width:107px;height:66px;background:#0a84e6;border-top:2px solid #4aa4ee;border-left:2px solid #3a9ae8;border-bottom:2.5px solid #0a3c90;border-right:2px solid #0a4a9a;border-radius:3px"></div>
<div class="t" style="left:745px;top:674px;color:#001a60;-webkit-text-stroke:0.35px #001a60">Save</div>
</body></html>
